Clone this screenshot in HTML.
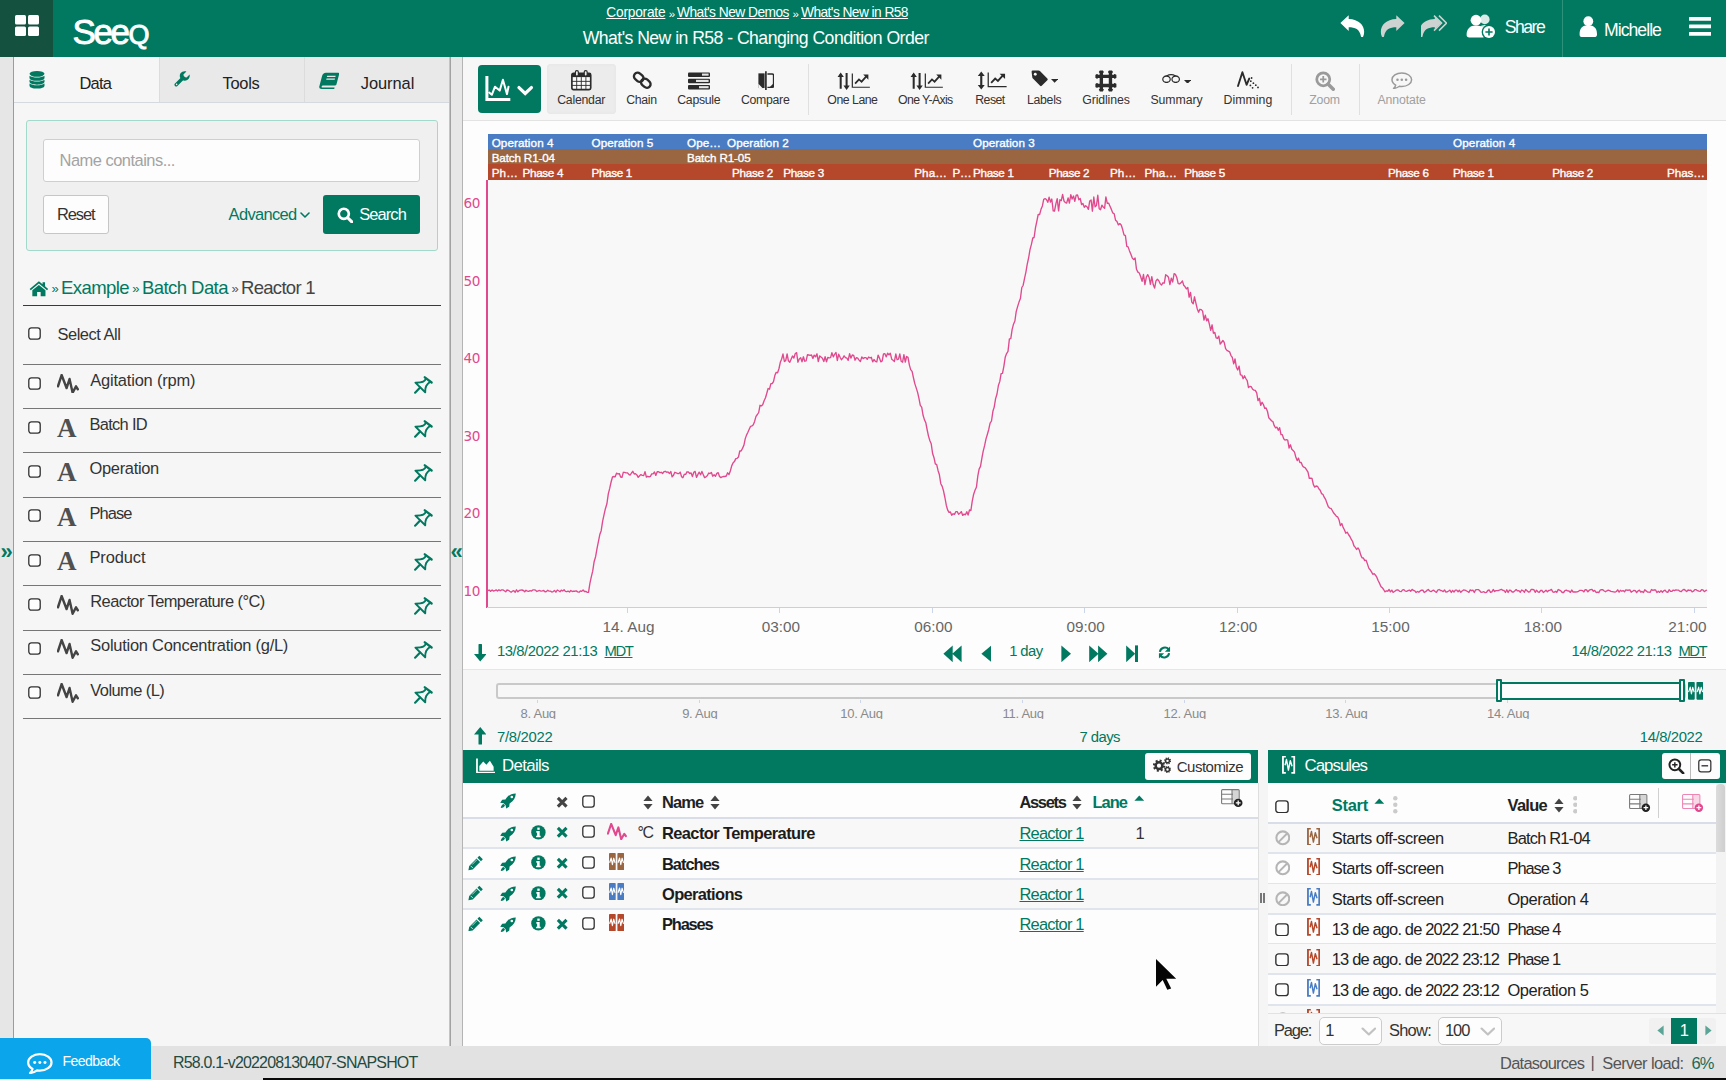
<!DOCTYPE html>
<html lang="en"><head><meta charset="utf-8"><title>Seeq - What's New in R58 - Changing Condition Order</title>
<style>
html,body{margin:0;padding:0;}
body{width:1726px;height:1080px;overflow:hidden;position:relative;background:#fdfdfd;font-family:"Liberation Sans",sans-serif;}
.b{position:absolute;display:block;}
.t{position:absolute;white-space:nowrap;line-height:20px;font-family:"Liberation Sans",sans-serif;}
</style></head>
<body>
<div class="b" style="left:0px;top:0px;width:1726px;height:1080px;background:#fdfdfd;"></div>
<div class="b" style="left:0px;top:0px;width:1726px;height:57px;background:#007960;"></div>
<div class="b" style="left:0px;top:0px;width:53px;height:57px;background:#15513f;"></div>
<svg class="b" style="left:14.5px;top:15px;" width="24" height="21" viewBox="0 0 24 21" preserveAspectRatio="none"><rect x="0" y="0" width="11" height="9.5" rx="1.5" fill="#fff"/><rect x="0" y="11.5" width="11" height="9.5" rx="1.5" fill="#fff"/><rect x="13" y="0" width="11" height="9.5" rx="1.5" fill="#fff"/><rect x="13" y="11.5" width="11" height="9.5" rx="1.5" fill="#fff"/></svg>
<span class="t" style="left:72.5px;top:11.6px;font-size:35px;line-height:40px;letter-spacing:-2.4px;color:#fff;font-weight:400;-webkit-text-stroke:0.9px #fff;">See<span style="font-size:27px;letter-spacing:0;margin-left:1px;text-transform:uppercase">q</span></span>
<span class="t " style="left:606.30px;top:2.96px;font-size:13.76px;letter-spacing:-0.232px;color:#fff;text-decoration:underline;">Corporate</span>
<span class="t " style="left:668.80px;top:3.73px;font-size:11.5px;letter-spacing:-0.230px;color:#fff;">»</span>
<span class="t " style="left:677.00px;top:2.96px;font-size:13.76px;letter-spacing:-0.524px;color:#fff;text-decoration:underline;">What's New Demos</span>
<span class="t " style="left:792.60px;top:3.73px;font-size:11.5px;letter-spacing:-0.230px;color:#fff;">»</span>
<span class="t " style="left:801.00px;top:2.96px;font-size:13.76px;letter-spacing:-0.563px;color:#fff;text-decoration:underline;">What's New in R58</span>
<span class="t " style="left:582.70px;top:27.50px;font-size:17.65px;letter-spacing:-0.545px;color:#fff;">What's New in R58 - Changing Condition Order</span>
<svg class="b" style="left:1339.5px;top:14.6px;" width="26" height="22.4" viewBox="0 0 26 22.400" preserveAspectRatio="none"><path d="M8.700 0.300 L0.400 8.100 L8.700 15.900 V12.200 C15 12.200 19.800 14 21 21.600 C21.200 22.400 22.800 22.400 23.200 21.600 C26.500 13 21 4.400 8.700 4 Z" fill="#fff"/></svg>
<svg class="b" style="left:1379.4px;top:14.6px;" width="26" height="22.4" viewBox="0 0 26 22.400" preserveAspectRatio="none"><g transform="translate(26 0) scale(-1 1)"><path d="M8.700 0.300 L0.400 8.100 L8.700 15.900 V12.200 C15 12.200 19.800 14 21 21.600 C21.200 22.400 22.800 22.400 23.200 21.600 C26.500 13 21 4.400 8.700 4 Z" fill="#cdd3d0"/></g></svg>
<svg class="b" style="left:1420.8px;top:14.6px;" width="26.4" height="22.4" viewBox="0 0 26.400 22.400" preserveAspectRatio="none"><g transform="translate(22.500 0) scale(-1 1)"><path d="M8.700 2.300 L2.400 8.100 L8.700 13.900 V12.200 C15 12.200 19.800 14 21 21.600 C21.200 22.400 22.800 22.400 23.200 21.600 C26.500 13 21 4.400 8.700 4 Z" fill="#cdd3d0"/></g><path d="M13 0.600 L20.600 8.100 L13 15.600 M18 0.600 L25.600 8.100 L18 15.600" fill="none" stroke="#cdd3d0" stroke-width="1.500"/></svg>
<svg class="b" style="left:1465.5px;top:14.4px;" width="30.5" height="25.5" viewBox="0 0 30.500 25.500" preserveAspectRatio="none"><circle cx="18.800" cy="5.400" r="4.800" fill="#fff" opacity="0.850"/><path d="M11.600 20 c0 -6 2.800 -9 7.200 -9 s7.400 3 7.400 9 c0 1.400 -1 2 -2.400 2 h-10 c-1.400 0 -2.200 -0.600 -2.200 -2z" fill="#fff" opacity="0.850"/><circle cx="10" cy="6.200" r="5.400" fill="#fff"/><path d="M0.600 21 c0 -6.400 3.400 -9.600 9.400 -9.600 s9.400 3.200 9.400 9.600 c0 1.600 -1 2.400 -2.600 2.400 h-13.600 c-1.600 0 -2.600 -0.800 -2.600 -2.400z" fill="#fff"/><circle cx="23" cy="18" r="7.400" fill="#007960"/><circle cx="23" cy="18" r="6" fill="#fff"/><path d="M19.400 18 h7.200 M23 14.400 v7.200" stroke="#007960" stroke-width="1.600"/></svg>
<span class="t " style="left:1504.70px;top:17.30px;font-size:17.65px;letter-spacing:-1.500px;color:#fff;">Share</span>
<div class="b" style="left:1562px;top:0px;width:1px;height:57px;background:rgba(255,255,255,0.18);"></div>
<svg class="b" style="left:1578.7px;top:15.6px;" width="18.6" height="21.4" viewBox="0 0 19 21.500" preserveAspectRatio="none"><circle cx="9.500" cy="5.200" r="5" fill="#fff"/><path d="M0.600 18.600 c0 -6.200 2.800 -9.200 8.900 -9.200 s8.900 3 8.900 9.200 c0 1.600 -1 2.600 -2.600 2.600 h-12.600 c-1.600 0 -2.600 -1 -2.600 -2.600z" fill="#fff"/></svg>
<span class="t " style="left:1604.00px;top:20.00px;font-size:17.65px;letter-spacing:-0.968px;color:#fff;">Michelle</span>
<svg class="b" style="left:1689px;top:16.8px;" width="22.4" height="19" viewBox="0 0 22 19" preserveAspectRatio="none"><rect x="0" y="0" width="22" height="3.800" rx="0.600" fill="#fff"/><rect x="0" y="7.5" width="22" height="3.800" rx="0.600" fill="#fff"/><rect x="0" y="15" width="22" height="3.800" rx="0.600" fill="#fff"/></svg>
<div class="b" style="left:0px;top:57px;width:13px;height:990px;background:#e6e6e6;"></div>
<div class="b" style="left:13px;top:57px;width:1px;height:990px;background:#9c9c9c;"></div>
<span class="t " style="left:0.60px;top:541.85px;font-size:22px;letter-spacing:0.000px;color:#007960;font-weight:700;">»</span>
<div class="b" style="left:14px;top:57px;width:435px;height:990px;background:#f6f6f6;"></div>
<div class="b" style="left:449px;top:57px;width:1px;height:990px;background:#c4c4c4;"></div>
<div class="b" style="left:450px;top:57px;width:1px;height:990px;background:#a2a2a2;"></div>
<div class="b" style="left:451px;top:57px;width:11px;height:990px;background:#e7e7e7;"></div>
<div class="b" style="left:462px;top:57px;width:1px;height:990px;background:#b4b4b4;"></div>
<span class="t " style="left:450.60px;top:541.85px;font-size:22px;letter-spacing:0.000px;color:#007960;font-weight:700;">«</span>
<div class="b" style="left:159px;top:57px;width:290px;height:45px;background:#e9e9e9;"></div>
<div class="b" style="left:158.5px;top:57px;width:1px;height:45px;background:#dcdcdc;"></div>
<div class="b" style="left:303.5px;top:57px;width:1px;height:45px;background:#dcdcdc;"></div>
<div class="b" style="left:14px;top:102px;width:435px;height:1px;background:#d5d9e0;"></div>
<svg class="b" style="left:28.5px;top:70.5px;" width="16" height="18" viewBox="0 0 16 19.5" preserveAspectRatio="none"><ellipse cx="8" cy="3.1" rx="7.5" ry="3.1" fill="#007960"/><path d="M0.5 5.2 v2.3 c0 1.8 3.4 3.1 7.5 3.1 s7.5 -1.3 7.5 -3.1 v-2.3 c-1.6 1.3 -4.5 1.9 -7.5 1.9 s-5.9 -0.6 -7.5 -1.9z" fill="#007960"/><path d="M0.5 9.4 v2.3 c0 1.8 3.4 3.1 7.5 3.1 s7.5 -1.3 7.5 -3.1 v-2.3 c-1.6 1.3 -4.5 1.9 -7.5 1.9 s-5.9 -0.6 -7.5 -1.9z" fill="#007960"/><path d="M0.5 13.6 v2.3 c0 1.8 3.4 3.1 7.5 3.1 s7.5 -1.3 7.5 -3.1 v-2.3 c-1.6 1.3 -4.5 1.9 -7.5 1.9 s-5.9 -0.6 -7.5 -1.9z" fill="#007960"/></svg>
<span class="t " style="left:79.50px;top:73.19px;font-size:16.47px;letter-spacing:-0.823px;color:#222;">Data</span>
<svg class="b" style="left:173.5px;top:71px;" width="16" height="16" viewBox="0 0 16 16" preserveAspectRatio="none"><path d="M2.2 13.8 L9.2 6.8" stroke="#007960" stroke-width="3.4" stroke-linecap="round" fill="none"/><path d="M15.6 3.6 l-3 3 l-2.6 -0.6 l-0.6 -2.6 l3 -3 c-2.2 -0.7 -4.6 0 -5.9 1.9 c-1.2 1.9 -0.9 4.4 0.7 6 c1.6 1.6 4.1 1.9 6 0.7 c1.9 -1.3 2.9 -3.2 2.4 -5.4z" fill="#007960"/><circle cx="2.6" cy="13.4" r="0.8" fill="#f0f0f0"/></svg>
<span class="t " style="left:222.50px;top:73.19px;font-size:16.47px;letter-spacing:-0.290px;color:#222;">Tools</span>
<svg class="b" style="left:318.5px;top:71.5px;" width="20" height="17" viewBox="-1 0 20 18" preserveAspectRatio="none"><g transform="skewX(-14)"><path d="M6.2 0.8 h12.3 a1.2 1.2 0 0 1 1.2 1.2 v11.2 a1.2 1.2 0 0 1 -1.2 1.2 h-12 a1 1 0 0 0 0 2 h12.2 v1.6 h-12.6 a3 3 0 0 1 -3 -3 v-10.8 a3.3 3.3 0 0 1 3.1 -3.4z" fill="#007960"/><rect x="8.2" y="4" width="8.5" height="1.3" fill="#e8e8e8"/><rect x="8.2" y="6.8" width="8.5" height="1.3" fill="#e8e8e8"/></g></svg>
<span class="t " style="left:360.80px;top:73.19px;font-size:16.47px;letter-spacing:-0.074px;color:#222;">Journal</span>
<div class="b" style="left:25.5px;top:120.4px;width:412px;height:131px;background:#f0f0f0;border:1.600px solid #a3d9cb;border-radius:3px;box-sizing:border-box;"></div>
<div class="b" style="left:42.5px;top:138.5px;width:377.5px;height:43.5px;background:#fdfdfd;border:1px solid #cfcfcf;border-radius:3px;box-sizing:border-box;"></div>
<span class="t " style="left:59.50px;top:150.29px;font-size:16.47px;letter-spacing:-0.505px;color:#a3a3a3;">Name contains...</span>
<div class="b" style="left:42.5px;top:195px;width:66px;height:39px;background:#fdfdfd;border:1px solid #c6c6c6;border-radius:3px;box-sizing:border-box;"></div>
<span class="t " style="left:57.00px;top:204.19px;font-size:16.47px;letter-spacing:-1.105px;color:#333;">Reset</span>
<span class="t " style="left:228.60px;top:204.19px;font-size:16.47px;letter-spacing:-0.657px;color:#007960;">Advanced</span>
<svg class="b" style="left:299.6px;top:211.6px;" width="10" height="6" viewBox="0 0 10 6" preserveAspectRatio="none"><path d="M1 1 L5 5 L9 1" fill="none" stroke="#007960" stroke-width="1.6" stroke-linecap="round" stroke-linejoin="round"/></svg>
<div class="b" style="left:323px;top:195px;width:97px;height:39px;background:#007960;border-radius:3px;"></div>
<svg class="b" style="left:336.5px;top:206.5px;" width="16.5" height="16.5" viewBox="0 0 16 16" preserveAspectRatio="none"><circle cx="6.6" cy="6.6" r="4.9" fill="none" stroke="#fff" stroke-width="2.6"/><path d="M10.4 10.4 L14.4 14.4" stroke="#fff" stroke-width="3.0" stroke-linecap="round"/></svg>
<span class="t " style="left:359.20px;top:204.19px;font-size:16.47px;letter-spacing:-0.898px;color:#fff;">Search</span>
<svg class="b" style="left:29px;top:280.2px;" width="19.8" height="16.6" viewBox="0 0 19 16" preserveAspectRatio="none"><path d="M9.5 1.2 L0.6 8.6 l1.1 1.3 L9.5 3.4 l7.8 6.5 l1.1 -1.3 l-3 -2.5 V2.2 h-2.4 v1.9z" fill="#007960"/><path d="M9.5 4.8 L3.2 10 v5.6 h4.6 v-4 h3.4 v4 h4.6 V10z" fill="#007960"/></svg>
<span class="t " style="left:51.50px;top:278.85px;font-size:13px;letter-spacing:-0.260px;color:#007960;">»</span>
<span class="t " style="left:61.00px;top:278.11px;font-size:18.55px;letter-spacing:-0.596px;color:#007960;">Example</span>
<span class="t " style="left:132.30px;top:278.85px;font-size:13px;letter-spacing:-0.260px;color:#007960;">»</span>
<span class="t " style="left:142.00px;top:278.11px;font-size:18.55px;letter-spacing:-0.577px;color:#007960;">Batch Data</span>
<span class="t " style="left:231.50px;top:278.85px;font-size:13px;letter-spacing:-0.260px;color:#555;">»</span>
<span class="t " style="left:241.00px;top:278.11px;font-size:18.55px;letter-spacing:-0.714px;color:#444;">Reactor 1</span>
<div class="b" style="left:23px;top:305px;width:417.5px;height:1px;background:#3a3a3a;"></div>
<svg class="b" style="left:28.2px;top:327.4px;" width="13" height="13" viewBox="0 0 13 13" preserveAspectRatio="none"><rect x="0.800" y="0.800" width="11.400" height="11.400" rx="2.600" fill="#fdfdfd" stroke="#303030" stroke-width="1.300"/></svg>
<span class="t " style="left:57.50px;top:324.09px;font-size:16.47px;letter-spacing:-0.475px;color:#333;">Select All</span>
<div class="b" style="left:23px;top:364px;width:417.5px;height:1px;background:#767676;"></div>
<svg class="b" style="left:28.2px;top:376.59999999999997px;" width="13" height="13" viewBox="0 0 13 13" preserveAspectRatio="none"><rect x="0.800" y="0.800" width="11.400" height="11.400" rx="2.600" fill="#fdfdfd" stroke="#303030" stroke-width="1.300"/></svg>
<svg class="b" style="left:56.5px;top:373.59999999999997px;" width="22" height="19.6" viewBox="0 0 20 17" preserveAspectRatio="none"><path d="M0.900 10.600 L4.200 0.900 L8.700 12.200 L11.400 4.400 L14.200 16.200 L17.300 10.800 L18.900 13.200" fill="none" stroke="#444" stroke-width="2.2" stroke-linejoin="round" stroke-linecap="round"/></svg>
<span class="t " style="left:90.30px;top:369.79px;font-size:16.47px;letter-spacing:-0.200px;color:#333;">Agitation (rpm)</span>
<svg class="b" style="left:414.3px;top:375.8px;" width="18.5" height="17.9" viewBox="0 0 18.500 17.900" preserveAspectRatio="none"><g fill="none" stroke="#007960" stroke-linejoin="round" stroke-linecap="round"><path d="M10.800 1.300 L17.600 6.500" stroke-width="2.300"/><path d="M11.900 2.600 C10.800 5.400 9.400 6.400 1.400 6.600 L11.200 16.300 C11 10.600 12.400 8.600 16.200 5.800" stroke-width="1.900"/><path d="M6.100 11.500 L1.100 16.700" stroke-width="2.100"/></g></svg>
<div class="b" style="left:23px;top:408px;width:417.5px;height:1px;background:#767676;"></div>
<svg class="b" style="left:28.2px;top:420.86999999999995px;" width="13" height="13" viewBox="0 0 13 13" preserveAspectRatio="none"><rect x="0.800" y="0.800" width="11.400" height="11.400" rx="2.600" fill="#fdfdfd" stroke="#303030" stroke-width="1.300"/></svg>
<span class="t" style="left:57px;top:414.07px;font-family:'Liberation Serif',serif;font-weight:700;font-size:27px;line-height:28px;color:#505050;">A</span>
<span class="t " style="left:89.50px;top:414.06px;font-size:16.47px;letter-spacing:-0.708px;color:#333;">Batch ID</span>
<svg class="b" style="left:414.3px;top:420.07px;" width="18.5" height="17.9" viewBox="0 0 18.500 17.900" preserveAspectRatio="none"><g fill="none" stroke="#007960" stroke-linejoin="round" stroke-linecap="round"><path d="M10.800 1.300 L17.600 6.500" stroke-width="2.300"/><path d="M11.900 2.600 C10.800 5.400 9.400 6.400 1.400 6.600 L11.200 16.300 C11 10.600 12.400 8.600 16.200 5.800" stroke-width="1.900"/><path d="M6.100 11.500 L1.100 16.700" stroke-width="2.100"/></g></svg>
<div class="b" style="left:23px;top:452px;width:417.5px;height:1px;background:#767676;"></div>
<svg class="b" style="left:28.2px;top:465.14px;" width="13" height="13" viewBox="0 0 13 13" preserveAspectRatio="none"><rect x="0.800" y="0.800" width="11.400" height="11.400" rx="2.600" fill="#fdfdfd" stroke="#303030" stroke-width="1.300"/></svg>
<span class="t" style="left:57px;top:458.34000000000003px;font-family:'Liberation Serif',serif;font-weight:700;font-size:27px;line-height:28px;color:#505050;">A</span>
<span class="t " style="left:89.50px;top:458.33px;font-size:16.47px;letter-spacing:-0.315px;color:#333;">Operation</span>
<svg class="b" style="left:414.3px;top:464.34000000000003px;" width="18.5" height="17.9" viewBox="0 0 18.500 17.900" preserveAspectRatio="none"><g fill="none" stroke="#007960" stroke-linejoin="round" stroke-linecap="round"><path d="M10.800 1.300 L17.600 6.500" stroke-width="2.300"/><path d="M11.900 2.600 C10.800 5.400 9.400 6.400 1.400 6.600 L11.200 16.300 C11 10.600 12.400 8.600 16.200 5.800" stroke-width="1.900"/><path d="M6.100 11.500 L1.100 16.700" stroke-width="2.100"/></g></svg>
<div class="b" style="left:23px;top:497px;width:417.5px;height:1px;background:#767676;"></div>
<svg class="b" style="left:28.2px;top:509.40999999999997px;" width="13" height="13" viewBox="0 0 13 13" preserveAspectRatio="none"><rect x="0.800" y="0.800" width="11.400" height="11.400" rx="2.600" fill="#fdfdfd" stroke="#303030" stroke-width="1.300"/></svg>
<span class="t" style="left:57px;top:502.61px;font-family:'Liberation Serif',serif;font-weight:700;font-size:27px;line-height:28px;color:#505050;">A</span>
<span class="t " style="left:89.50px;top:502.60px;font-size:16.47px;letter-spacing:-0.940px;color:#333;">Phase</span>
<svg class="b" style="left:414.3px;top:508.61px;" width="18.5" height="17.9" viewBox="0 0 18.500 17.900" preserveAspectRatio="none"><g fill="none" stroke="#007960" stroke-linejoin="round" stroke-linecap="round"><path d="M10.800 1.300 L17.600 6.500" stroke-width="2.300"/><path d="M11.900 2.600 C10.800 5.400 9.400 6.400 1.400 6.600 L11.200 16.300 C11 10.600 12.400 8.600 16.200 5.800" stroke-width="1.900"/><path d="M6.100 11.500 L1.100 16.700" stroke-width="2.100"/></g></svg>
<div class="b" style="left:23px;top:541px;width:417.5px;height:1px;background:#767676;"></div>
<svg class="b" style="left:28.2px;top:553.68px;" width="13" height="13" viewBox="0 0 13 13" preserveAspectRatio="none"><rect x="0.800" y="0.800" width="11.400" height="11.400" rx="2.600" fill="#fdfdfd" stroke="#303030" stroke-width="1.300"/></svg>
<span class="t" style="left:57px;top:546.88px;font-family:'Liberation Serif',serif;font-weight:700;font-size:27px;line-height:28px;color:#505050;">A</span>
<span class="t " style="left:89.50px;top:546.87px;font-size:16.47px;letter-spacing:-0.109px;color:#333;">Product</span>
<svg class="b" style="left:414.3px;top:552.88px;" width="18.5" height="17.9" viewBox="0 0 18.500 17.900" preserveAspectRatio="none"><g fill="none" stroke="#007960" stroke-linejoin="round" stroke-linecap="round"><path d="M10.800 1.300 L17.600 6.500" stroke-width="2.300"/><path d="M11.900 2.600 C10.800 5.400 9.400 6.400 1.400 6.600 L11.200 16.300 C11 10.600 12.400 8.600 16.200 5.800" stroke-width="1.900"/><path d="M6.100 11.500 L1.100 16.700" stroke-width="2.100"/></g></svg>
<div class="b" style="left:23px;top:585px;width:417.5px;height:1px;background:#767676;"></div>
<svg class="b" style="left:28.2px;top:597.9499999999999px;" width="13" height="13" viewBox="0 0 13 13" preserveAspectRatio="none"><rect x="0.800" y="0.800" width="11.400" height="11.400" rx="2.600" fill="#fdfdfd" stroke="#303030" stroke-width="1.300"/></svg>
<svg class="b" style="left:56.5px;top:594.9499999999999px;" width="22" height="19.6" viewBox="0 0 20 17" preserveAspectRatio="none"><path d="M0.900 10.600 L4.200 0.900 L8.700 12.200 L11.400 4.400 L14.200 16.200 L17.300 10.800 L18.900 13.200" fill="none" stroke="#444" stroke-width="2.2" stroke-linejoin="round" stroke-linecap="round"/></svg>
<span class="t " style="left:90.30px;top:591.14px;font-size:16.47px;letter-spacing:-0.581px;color:#333;">Reactor Temperature (°C)</span>
<svg class="b" style="left:414.3px;top:597.15px;" width="18.5" height="17.9" viewBox="0 0 18.500 17.900" preserveAspectRatio="none"><g fill="none" stroke="#007960" stroke-linejoin="round" stroke-linecap="round"><path d="M10.800 1.300 L17.600 6.500" stroke-width="2.300"/><path d="M11.900 2.600 C10.800 5.400 9.400 6.400 1.400 6.600 L11.200 16.300 C11 10.600 12.400 8.600 16.200 5.800" stroke-width="1.900"/><path d="M6.100 11.500 L1.100 16.700" stroke-width="2.100"/></g></svg>
<div class="b" style="left:23px;top:630px;width:417.5px;height:1px;background:#767676;"></div>
<svg class="b" style="left:28.2px;top:642.2199999999999px;" width="13" height="13" viewBox="0 0 13 13" preserveAspectRatio="none"><rect x="0.800" y="0.800" width="11.400" height="11.400" rx="2.600" fill="#fdfdfd" stroke="#303030" stroke-width="1.300"/></svg>
<svg class="b" style="left:56.5px;top:639.2199999999999px;" width="22" height="19.6" viewBox="0 0 20 17" preserveAspectRatio="none"><path d="M0.900 10.600 L4.200 0.900 L8.700 12.200 L11.400 4.400 L14.200 16.200 L17.300 10.800 L18.900 13.200" fill="none" stroke="#444" stroke-width="2.2" stroke-linejoin="round" stroke-linecap="round"/></svg>
<span class="t " style="left:90.30px;top:635.41px;font-size:16.47px;letter-spacing:-0.253px;color:#333;">Solution Concentration (g/L)</span>
<svg class="b" style="left:414.3px;top:641.42px;" width="18.5" height="17.9" viewBox="0 0 18.500 17.900" preserveAspectRatio="none"><g fill="none" stroke="#007960" stroke-linejoin="round" stroke-linecap="round"><path d="M10.800 1.300 L17.600 6.500" stroke-width="2.300"/><path d="M11.900 2.600 C10.800 5.400 9.400 6.400 1.400 6.600 L11.200 16.300 C11 10.600 12.400 8.600 16.200 5.800" stroke-width="1.900"/><path d="M6.100 11.500 L1.100 16.700" stroke-width="2.100"/></g></svg>
<div class="b" style="left:23px;top:674px;width:417.5px;height:1px;background:#767676;"></div>
<svg class="b" style="left:28.2px;top:686.49px;" width="13" height="13" viewBox="0 0 13 13" preserveAspectRatio="none"><rect x="0.800" y="0.800" width="11.400" height="11.400" rx="2.600" fill="#fdfdfd" stroke="#303030" stroke-width="1.300"/></svg>
<svg class="b" style="left:56.5px;top:683.49px;" width="22" height="19.6" viewBox="0 0 20 17" preserveAspectRatio="none"><path d="M0.900 10.600 L4.200 0.900 L8.700 12.200 L11.400 4.400 L14.200 16.200 L17.300 10.800 L18.900 13.200" fill="none" stroke="#444" stroke-width="2.2" stroke-linejoin="round" stroke-linecap="round"/></svg>
<span class="t " style="left:90.30px;top:679.68px;font-size:16.47px;letter-spacing:-0.564px;color:#333;">Volume (L)</span>
<svg class="b" style="left:414.3px;top:685.69px;" width="18.5" height="17.9" viewBox="0 0 18.500 17.900" preserveAspectRatio="none"><g fill="none" stroke="#007960" stroke-linejoin="round" stroke-linecap="round"><path d="M10.800 1.300 L17.600 6.500" stroke-width="2.300"/><path d="M11.900 2.600 C10.800 5.400 9.400 6.400 1.400 6.600 L11.200 16.300 C11 10.600 12.400 8.600 16.200 5.800" stroke-width="1.900"/><path d="M6.100 11.500 L1.100 16.700" stroke-width="2.100"/></g></svg>
<div class="b" style="left:23px;top:718px;width:417.5px;height:1px;background:#767676;"></div>
<div class="b" style="left:463px;top:57px;width:1263px;height:63px;background:#f7f7f7;"></div>
<div class="b" style="left:463px;top:120px;width:1263px;height:1px;background:#e3e3e3;"></div>
<div class="b" style="left:477.8px;top:65px;width:63.1px;height:47.8px;background:#007960;border-radius:4px;"></div>
<svg class="b" style="left:0px;top:0px" width="560" height="120" viewBox="0 0 560 120"><path d="M486.900 76 V99.500 H510.300" fill="none" stroke="#fff" stroke-width="3"/><path d="M489.200 92.600 L491.800 94.800 L495 86.700 L499.700 90.600 L502.900 79.800 L507 94.100 L508.500 86.700" fill="none" stroke="#fff" stroke-width="2" stroke-linejoin="round" stroke-linecap="round"/><path d="M519 87.600 L525.200 93.400 L531.400 87.600" fill="none" stroke="#fff" stroke-width="3.300" stroke-linecap="round" stroke-linejoin="miter"/></svg>
<div class="b" style="left:547.3px;top:63.7px;width:68.7px;height:50.3px;background:#ececec;border-radius:4px;box-shadow:inset 0 0 3px #e2e2e2;"></div>
<svg class="b" style="left:571.4px;top:70px;" width="20.6" height="20.6" viewBox="0 0 21 20.300" preserveAspectRatio="none"><rect x="0.900" y="3.400" width="19.200" height="16" rx="1.600" fill="#fbfbfb" stroke="#2b2b2b" stroke-width="1.700"/><rect x="0.900" y="3.400" width="19.200" height="3.600" fill="#2b2b2b"/><path d="M1 11.200 h19 M1 15.200 h19 M5.800 7 v12.400 M10.500 7 v12.400 M15.200 7 v12.400" stroke="#2b2b2b" stroke-width="0.900"/><rect x="4.500" y="0.600" width="3" height="5.400" rx="1.400" fill="#ececec" stroke="#2b2b2b" stroke-width="1.200"/><rect x="13.500" y="0.600" width="3" height="5.400" rx="1.400" fill="#ececec" stroke="#2b2b2b" stroke-width="1.200"/></svg>
<span class="t " style="left:557.20px;top:89.94px;font-size:12.31px;letter-spacing:-0.245px;color:#333;">Calendar</span>
<svg class="b" style="left:631.6px;top:69.6px;" width="20.5" height="20.5" viewBox="0 0 20 20" preserveAspectRatio="none"><g fill="none" stroke="#2b2b2b" stroke-width="2.3" transform="rotate(40 10 10)"><rect x="0.5" y="6.4" width="10" height="7.2" rx="3.6"/><rect x="9.5" y="6.4" width="10" height="7.2" rx="3.6"/></g></svg>
<span class="t " style="left:626.25px;top:89.94px;font-size:12.31px;letter-spacing:-0.333px;color:#333;">Chain</span>
<svg class="b" style="left:688px;top:71.6px;" width="22" height="18" viewBox="0 0 22 18.6" preserveAspectRatio="none"><rect x="0" y="0.5" width="22" height="4.6" rx="1" fill="#2b2b2b"/><rect x="0" y="7" width="22" height="4.6" rx="1" fill="#2b2b2b"/><rect x="0" y="13.5" width="22" height="4.6" rx="1" fill="#2b2b2b"/><rect x="14" y="1.6" width="6.6" height="2.2" fill="#e4e4e4"/><rect x="8" y="8.1" width="12.6" height="2.2" fill="#e4e4e4"/><rect x="11" y="14.6" width="9.6" height="2.2" fill="#e4e4e4"/></svg>
<span class="t " style="left:677.30px;top:89.94px;font-size:12.31px;letter-spacing:-0.309px;color:#333;">Capsule</span>
<svg class="b" style="left:757.6px;top:70.8px;" width="16.4" height="19.6" viewBox="0 0 16.400 20" preserveAspectRatio="none"><path d="M0.400 2.400 H6.600 V17.400 H0.400z" fill="#2b2b2b"/><path d="M0.400 17.400 V13 L4.400 17.400z" fill="#f7f7f7"/><path d="M7.900 0.200 V19.800" stroke="#2b2b2b" stroke-width="1.700"/><path d="M9.400 3.100 H14.200 a1.400 1.400 0 0 1 1.400 1.400 V15.300 a1.400 1.400 0 0 1 -1.400 1.400 H9.400" fill="none" stroke="#2b2b2b" stroke-width="1.500"/><path d="M15.600 12.400 V16.800 H11.400z" fill="#2b2b2b"/></svg>
<span class="t " style="left:740.90px;top:89.94px;font-size:12.31px;letter-spacing:-0.290px;color:#333;">Compare</span>
<div class="b" style="left:808px;top:63.5px;width:1px;height:51px;background:#e0e0e0;"></div>
<svg class="b" style="left:836.6px;top:71.6px;" width="33.8" height="18.6" viewBox="0 0 36.6 20" preserveAspectRatio="none"><path d="M4 2.4 V18 M10.4 1 V16.6" stroke="#2b2b2b" stroke-width="2.2"/><path d="M0.6 5.4 L4 0.6 L7.4 5.4z M7 14.6 L10.4 19.4 L13.8 14.6z" fill="#2b2b2b"/><path d="M16.6 1.600 V16.400 H35.6" fill="none" stroke="#2b2b2b" stroke-width="1.300"/><path d="M19.6 12.600 L23.799999999999997 8 L26.6 10.400 L32.0 4.400" fill="none" stroke="#2b2b2b" stroke-width="1.900"/><path d="M28.4 2.800 H34.0 V8.400z" fill="#2b2b2b"/></svg>
<span class="t " style="left:827.30px;top:89.94px;font-size:12.31px;letter-spacing:-0.484px;color:#333;">One Lane</span>
<svg class="b" style="left:909.6px;top:71.6px;" width="33.8" height="18.6" viewBox="0 0 36.6 20" preserveAspectRatio="none"><path d="M4 2.4 V18 M10.4 1 V16.6" stroke="#2b2b2b" stroke-width="2.2"/><path d="M0.6 5.4 L4 0.6 L7.4 5.4z M7 14.6 L10.4 19.4 L13.8 14.6z" fill="#2b2b2b"/><path d="M16.6 1.600 V16.400 H35.6" fill="none" stroke="#2b2b2b" stroke-width="1.300"/><path d="M19.6 12.600 L23.799999999999997 8 L26.6 10.400 L32.0 4.400" fill="none" stroke="#2b2b2b" stroke-width="1.900"/><path d="M28.4 2.800 H34.0 V8.400z" fill="#2b2b2b"/></svg>
<span class="t " style="left:898.10px;top:89.94px;font-size:12.31px;letter-spacing:-0.630px;color:#333;">One Y-Axis</span>
<svg class="b" style="left:976.6px;top:71.4px;" width="30.6" height="19" viewBox="0 0 31.6 20" preserveAspectRatio="none"><path d="M4.4 3 V17" stroke="#2b2b2b" stroke-width="2.2"/><path d="M0.8 5.2 L4.4 0.4 L8 5.2z M0.8 14.8 L4.4 19.6 L8 14.8z" fill="#2b2b2b"/><path d="M11.6 1.600 V16.400 H30.6" fill="none" stroke="#2b2b2b" stroke-width="1.300"/><path d="M14.6 12.600 L18.799999999999997 8 L21.6 10.400 L27.0 4.400" fill="none" stroke="#2b2b2b" stroke-width="1.900"/><path d="M23.4 2.800 H29.0 V8.400z" fill="#2b2b2b"/></svg>
<span class="t " style="left:975.25px;top:89.94px;font-size:12.31px;letter-spacing:-0.532px;color:#333;">Reset</span>
<svg class="b" style="left:1030.6px;top:70px;" width="17.4" height="16.6" viewBox="0 0 18 17" preserveAspectRatio="none"><path d="M0.6 1.8 a1.2 1.2 0 0 1 1.2 -1.2 h6 c0.6 0 1.3 0.3 1.7 0.7 l7.4 7.4 a1.2 1.2 0 0 1 0 1.7 l-5.8 5.8 a1.2 1.2 0 0 1 -1.7 0 L2 8.8 C1.6 8.400 1.300 7.700 1.300 7.100z" fill="#2b2b2b"/><circle cx="4.400" cy="4.400" r="1.500" fill="#f7f7f7"/></svg>
<svg class="b" style="left:1051px;top:79.4px;" width="7.2" height="3.8" viewBox="0 0 8 4.4" preserveAspectRatio="none"><path d="M0 0 H8 L4 4.400z" fill="#2b2b2b"/></svg>
<span class="t " style="left:1026.90px;top:89.94px;font-size:12.31px;letter-spacing:-0.279px;color:#333;">Labels</span>
<svg class="b" style="left:1095.4px;top:70.4px;" width="21.8" height="21.8" viewBox="0 0 22 22" preserveAspectRatio="none"><path d="M6.400 0.400 V21.600 M15.600 0.400 V21.600 M0.400 6.400 H21.600 M0.400 15.600 H21.600" stroke="#2b2b2b" stroke-width="3.400"/><path d="M4 2 h4.800 M13.200 2 h4.800 M4 20 h4.800 M13.200 20 h4.800 M2 4 v4.800 M2 13.200 v4.800 M20 4 v4.800 M20 13.200 v4.800" stroke="#2b2b2b" stroke-width="1.400"/></svg>
<span class="t " style="left:1082.20px;top:89.94px;font-size:12.31px;letter-spacing:-0.108px;color:#333;">Gridlines</span>
<svg class="b" style="left:1162.4px;top:73.8px;" width="18.2" height="9" viewBox="0 0 21 9" preserveAspectRatio="none"><ellipse cx="5.200" cy="5.200" rx="4.300" ry="3.200" fill="none" stroke="#2b2b2b" stroke-width="1.400"/><ellipse cx="15.800" cy="5.200" rx="4.300" ry="3.200" fill="none" stroke="#2b2b2b" stroke-width="1.400"/><path d="M5.200 2 Q10.500 -0.600 15.800 2" fill="none" stroke="#2b2b2b" stroke-width="1.300"/></svg>
<svg class="b" style="left:1184px;top:79.6px;" width="7.2" height="3.8" viewBox="0 0 8 4.4" preserveAspectRatio="none"><path d="M0 0 H8 L4 4.400z" fill="#2b2b2b"/></svg>
<span class="t " style="left:1150.50px;top:89.94px;font-size:12.31px;letter-spacing:-0.095px;color:#333;">Summary</span>
<svg class="b" style="left:1237px;top:71.4px;" width="22" height="18" viewBox="0 0 22 18" preserveAspectRatio="none"><path d="M1 15 L5.400 1.200 L9.600 13.800 L12.200 7.600" fill="none" stroke="#2b2b2b" stroke-width="1.900" stroke-linejoin="round" stroke-linecap="round"/><circle cx="13.8" cy="10.2" r="0.900" fill="#2b2b2b"/><circle cx="16.4" cy="12.2" r="0.900" fill="#2b2b2b"/><circle cx="13.4" cy="14.4" r="0.900" fill="#2b2b2b"/><circle cx="18.8" cy="14.2" r="0.900" fill="#2b2b2b"/><circle cx="15.6" cy="16.8" r="0.900" fill="#2b2b2b"/><circle cx="21" cy="16.4" r="0.900" fill="#2b2b2b"/><circle cx="14.6" cy="7" r="0.900" fill="#2b2b2b"/></svg>
<span class="t " style="left:1223.60px;top:89.94px;font-size:12.31px;letter-spacing:0.034px;color:#333;">Dimming</span>
<div class="b" style="left:1291px;top:63.5px;width:1px;height:51px;background:#e0e0e0;"></div>
<svg class="b" style="left:1314.6px;top:71.4px;" width="20" height="20" viewBox="0 0 16 16" preserveAspectRatio="none"><circle cx="6.6" cy="6.6" r="5.2" fill="none" stroke="#9a9a9a" stroke-width="2.2"/><path d="M10.6 10.6 L14.6 14.6" stroke="#9a9a9a" stroke-width="2.8000000000000003" stroke-linecap="round"/><path d="M4 6.6 h5.2 M6.6 4 v5.2" stroke="#9a9a9a" stroke-width="1.4"/></svg>
<span class="t " style="left:1309.30px;top:89.94px;font-size:12.31px;letter-spacing:-0.217px;color:#a0a0a0;">Zoom</span>
<div class="b" style="left:1359px;top:63.5px;width:1px;height:51px;background:#e0e0e0;"></div>
<svg class="b" style="left:1391px;top:71.6px;" width="21.6" height="17.6" viewBox="0 0 22 18.600" preserveAspectRatio="none"><path d="M11 1 C5.400 1 1 4.200 1 8.200 c0 2.300 1.500 4.300 3.800 5.600 c-0.300 1.400 -1.100 2.600 -2.200 3.600 c2.400 -0.200 4.400 -1 6 -2.300 c0.800 0.100 1.600 0.200 2.400 0.200 c5.600 0 10 -3.200 10 -7.100 S16.600 1 11 1z" fill="none" stroke="#9a9a9a" stroke-width="1.5" stroke-linejoin="round"/><circle cx="6.6" cy="8.200" r="1.300" fill="#9a9a9a"/><circle cx="11" cy="8.200" r="1.300" fill="#9a9a9a"/><circle cx="15.4" cy="8.200" r="1.300" fill="#9a9a9a"/></svg>
<span class="t " style="left:1377.40px;top:89.94px;font-size:12.31px;letter-spacing:-0.110px;color:#a0a0a0;">Annotate</span>
<div class="b" style="left:487.5px;top:180px;width:1219.5px;height:427px;background:#f8f8f8;"></div>
<div class="b" style="left:487.5px;top:133.8px;width:1219.5px;height:15.2px;background:#4a7cc4;"></div>
<div class="b" style="left:487.5px;top:149px;width:1219.5px;height:15.2px;background:#9a6541;"></div>
<div class="b" style="left:487.5px;top:164.2px;width:1219.5px;height:15.4px;background:#b5482a;"></div>
<span class="t " style="left:491.70px;top:132.63px;font-size:11.67px;letter-spacing:0.092px;color:#fff;-webkit-text-stroke:0.350px #fff;">Operation 4</span>
<span class="t " style="left:591.50px;top:132.63px;font-size:11.67px;letter-spacing:0.092px;color:#fff;-webkit-text-stroke:0.350px #fff;">Operation 5</span>
<span class="t " style="left:687.00px;top:132.63px;font-size:11.67px;letter-spacing:0.068px;color:#fff;-webkit-text-stroke:0.350px #fff;">Ope…</span>
<span class="t " style="left:727.00px;top:132.63px;font-size:11.67px;letter-spacing:0.092px;color:#fff;-webkit-text-stroke:0.350px #fff;">Operation 2</span>
<span class="t " style="left:973.00px;top:132.63px;font-size:11.67px;letter-spacing:0.092px;color:#fff;-webkit-text-stroke:0.350px #fff;">Operation 3</span>
<span class="t " style="left:1453.00px;top:132.63px;font-size:11.67px;letter-spacing:0.138px;color:#fff;-webkit-text-stroke:0.350px #fff;">Operation 4</span>
<span class="t " style="left:491.70px;top:148.13px;font-size:11.67px;letter-spacing:-0.143px;color:#fff;-webkit-text-stroke:0.350px #fff;">Batch R1-04</span>
<span class="t " style="left:687.00px;top:148.13px;font-size:11.67px;letter-spacing:-0.106px;color:#fff;-webkit-text-stroke:0.350px #fff;">Batch R1-05</span>
<span class="t " style="left:491.70px;top:162.63px;font-size:11.67px;letter-spacing:0.119px;color:#fff;-webkit-text-stroke:0.350px #fff;">Ph…</span>
<span class="t " style="left:522.50px;top:162.63px;font-size:11.67px;letter-spacing:-0.303px;color:#fff;-webkit-text-stroke:0.350px #fff;">Phase 4</span>
<span class="t " style="left:591.50px;top:162.63px;font-size:11.67px;letter-spacing:-0.332px;color:#fff;-webkit-text-stroke:0.350px #fff;">Phase 1</span>
<span class="t " style="left:732.00px;top:162.63px;font-size:11.67px;letter-spacing:-0.260px;color:#fff;-webkit-text-stroke:0.350px #fff;">Phase 2</span>
<span class="t " style="left:783.20px;top:162.63px;font-size:11.67px;letter-spacing:-0.289px;color:#fff;-webkit-text-stroke:0.350px #fff;">Phase 3</span>
<span class="t " style="left:914.20px;top:162.63px;font-size:11.67px;letter-spacing:0.091px;color:#fff;-webkit-text-stroke:0.350px #fff;">Pha…</span>
<span class="t " style="left:952.50px;top:162.63px;font-size:11.67px;letter-spacing:-0.377px;color:#fff;-webkit-text-stroke:0.350px #fff;">P…</span>
<span class="t " style="left:973.00px;top:162.63px;font-size:11.67px;letter-spacing:-0.303px;color:#fff;-webkit-text-stroke:0.350px #fff;">Phase 1</span>
<span class="t " style="left:1048.70px;top:162.63px;font-size:11.67px;letter-spacing:-0.332px;color:#fff;-webkit-text-stroke:0.350px #fff;">Phase 2</span>
<span class="t " style="left:1110.00px;top:162.63px;font-size:11.67px;letter-spacing:0.085px;color:#fff;-webkit-text-stroke:0.350px #fff;">Ph…</span>
<span class="t " style="left:1144.50px;top:162.63px;font-size:11.67px;letter-spacing:0.016px;color:#fff;-webkit-text-stroke:0.350px #fff;">Pha…</span>
<span class="t " style="left:1184.20px;top:162.63px;font-size:11.67px;letter-spacing:-0.289px;color:#fff;-webkit-text-stroke:0.350px #fff;">Phase 5</span>
<span class="t " style="left:1388.00px;top:162.63px;font-size:11.67px;letter-spacing:-0.303px;color:#fff;-webkit-text-stroke:0.350px #fff;">Phase 6</span>
<span class="t " style="left:1453.00px;top:162.63px;font-size:11.67px;letter-spacing:-0.303px;color:#fff;-webkit-text-stroke:0.350px #fff;">Phase 1</span>
<span class="t " style="left:1552.30px;top:162.63px;font-size:11.67px;letter-spacing:-0.303px;color:#fff;-webkit-text-stroke:0.350px #fff;">Phase 2</span>
<span class="t " style="left:1667.00px;top:162.63px;font-size:11.67px;letter-spacing:-0.054px;color:#fff;-webkit-text-stroke:0.350px #fff;">Phas…</span>
<div class="b" style="left:486.3px;top:180px;width:1.7px;height:428px;background:#e1498e;"></div>
<span class="t" style="left:463.6px;top:192.6px;font-family:'DejaVu Sans',sans-serif;font-size:13.6px;letter-spacing:-0.5px;color:#e1498e;">60</span>
<span class="t" style="left:463.6px;top:271px;font-family:'DejaVu Sans',sans-serif;font-size:13.6px;letter-spacing:-0.5px;color:#e1498e;">50</span>
<span class="t" style="left:463.6px;top:348.2px;font-family:'DejaVu Sans',sans-serif;font-size:13.6px;letter-spacing:-0.5px;color:#e1498e;">40</span>
<span class="t" style="left:463.6px;top:426.2px;font-family:'DejaVu Sans',sans-serif;font-size:13.6px;letter-spacing:-0.5px;color:#e1498e;">30</span>
<span class="t" style="left:463.6px;top:503.4px;font-family:'DejaVu Sans',sans-serif;font-size:13.6px;letter-spacing:-0.5px;color:#e1498e;">20</span>
<span class="t" style="left:463.6px;top:581.3px;font-family:'DejaVu Sans',sans-serif;font-size:13.6px;letter-spacing:-0.5px;color:#e1498e;">10</span>
<div class="b" style="left:487px;top:607px;width:1220px;height:1px;background:#c4d0ea;"></div>
<div class="b" style="left:627.0px;top:608px;width:1px;height:5.4px;background:#ccd6eb;"></div>
<div class="b" style="left:779.4px;top:608px;width:1px;height:5.4px;background:#ccd6eb;"></div>
<div class="b" style="left:931.8px;top:608px;width:1px;height:5.4px;background:#ccd6eb;"></div>
<div class="b" style="left:1084.2px;top:608px;width:1px;height:5.4px;background:#ccd6eb;"></div>
<div class="b" style="left:1236.6px;top:608px;width:1px;height:5.4px;background:#ccd6eb;"></div>
<div class="b" style="left:1389.0px;top:608px;width:1px;height:5.4px;background:#ccd6eb;"></div>
<div class="b" style="left:1541.4px;top:608px;width:1px;height:5.4px;background:#ccd6eb;"></div>
<div class="b" style="left:1693.8px;top:608px;width:1px;height:5.4px;background:#ccd6eb;"></div>
<span class="t " style="left:602.55px;top:617.08px;font-size:15.3px;letter-spacing:0.000px;color:#666;">14. Aug</span>
<span class="t " style="left:761.76px;top:617.08px;font-size:15.3px;letter-spacing:0.000px;color:#666;">03:00</span>
<span class="t " style="left:914.16px;top:617.08px;font-size:15.3px;letter-spacing:0.000px;color:#666;">06:00</span>
<span class="t " style="left:1066.56px;top:617.08px;font-size:15.3px;letter-spacing:0.000px;color:#666;">09:00</span>
<span class="t " style="left:1218.96px;top:617.08px;font-size:15.3px;letter-spacing:0.000px;color:#666;">12:00</span>
<span class="t " style="left:1371.36px;top:617.08px;font-size:15.3px;letter-spacing:0.000px;color:#666;">15:00</span>
<span class="t " style="left:1523.76px;top:617.08px;font-size:15.3px;letter-spacing:0.000px;color:#666;">18:00</span>
<span class="t " style="left:1668.21px;top:617.08px;font-size:15.3px;letter-spacing:0.000px;color:#666;">21:00</span>
<svg class="b" style="left:0;top:0" width="1726" height="620" viewBox="0 0 1726 620"><path d="M488.0 590.5 L489.4 590.1 L490.7 591.4 L492.1 589.9 L493.4 591.1 L494.8 590.7 L496.1 589.9 L497.5 591.0 L498.9 589.8 L500.2 590.8 L501.6 589.9 L502.9 589.9 L504.3 590.8 L505.7 591.8 L507.0 590.0 L508.4 590.3 L509.7 591.3 L511.1 592.2 L512.4 591.2 L513.8 590.7 L515.2 592.2 L516.5 589.8 L517.9 591.9 L519.2 590.5 L520.6 590.1 L522.0 590.0 L523.3 590.5 L524.7 591.8 L526.0 590.2 L527.4 591.2 L528.7 591.4 L530.1 590.7 L531.5 591.1 L532.8 589.9 L534.2 589.9 L535.5 590.2 L536.9 591.5 L538.2 590.8 L539.6 590.5 L541.0 591.2 L542.3 590.9 L543.7 590.5 L545.0 591.8 L546.4 591.5 L547.8 590.3 L549.1 591.2 L550.5 591.1 L551.8 592.0 L553.2 591.6 L554.5 590.4 L555.9 592.2 L557.3 590.0 L558.6 590.8 L560.0 591.7 L561.3 590.1 L562.7 591.0 L564.1 589.8 L565.4 591.4 L566.8 591.7 L568.1 591.2 L569.5 592.0 L570.8 590.5 L572.2 591.5 L573.6 591.2 L574.9 591.2 L576.3 590.9 L577.6 591.9 L579.0 592.2 L580.4 590.9 L581.7 591.4 L583.1 589.9 L584.4 591.5 L585.8 591.4 L587.1 592.3 L588.5 592.3 L589.9 583.3 L591.3 576.9 L592.7 571.2 L594.1 561.8 L595.6 556.7 L597.0 548.7 L598.4 541.7 L599.8 534.6 L601.2 530.7 L602.6 521.3 L604.0 514.9 L605.4 508.7 L606.9 503.8 L608.3 493.8 L609.7 488.4 L611.1 482.0 L612.5 477.0 L613.9 476.5 L615.2 476.8 L616.6 473.1 L617.9 474.0 L619.3 473.6 L620.6 477.0 L622.0 477.4 L623.3 472.3 L624.7 472.4 L626.0 472.8 L627.4 472.8 L628.8 474.4 L630.1 475.1 L631.5 473.0 L632.8 471.3 L634.2 474.0 L635.5 473.7 L636.9 474.9 L638.2 477.4 L639.6 475.7 L640.9 474.6 L642.3 475.3 L643.7 475.6 L645.0 471.6 L646.4 477.1 L647.7 476.3 L649.1 476.9 L650.4 476.4 L651.8 473.8 L653.1 473.9 L654.5 472.0 L655.8 475.4 L657.2 471.7 L658.6 471.7 L659.9 472.6 L661.3 472.3 L662.6 473.5 L664.0 471.6 L665.3 471.3 L666.7 472.3 L668.0 471.9 L669.4 473.6 L670.8 471.5 L672.1 476.9 L673.5 475.2 L674.8 472.3 L676.2 472.9 L677.5 473.5 L678.9 473.6 L680.2 472.1 L681.6 476.7 L682.9 477.7 L684.3 474.3 L685.7 474.4 L687.0 471.8 L688.4 472.0 L689.7 473.5 L691.1 473.0 L692.4 476.6 L693.8 472.3 L695.1 471.4 L696.5 477.4 L697.8 474.7 L699.2 472.2 L700.6 474.8 L701.9 471.5 L703.3 474.7 L704.6 477.6 L706.0 476.8 L707.3 475.8 L708.7 473.0 L710.0 473.6 L711.4 472.4 L712.7 476.2 L714.1 474.7 L715.5 476.3 L716.8 473.4 L718.2 472.7 L719.5 476.5 L720.9 477.6 L722.2 476.8 L723.6 476.5 L724.9 476.5 L726.3 476.0 L727.6 472.8 L729.0 474.6 L730.4 470.7 L731.7 465.9 L733.0 463.0 L734.4 461.6 L735.8 458.6 L737.1 458.3 L738.5 456.9 L739.8 451.0 L741.1 451.0 L742.5 448.4 L743.9 445.3 L745.2 438.9 L746.5 435.1 L747.9 432.3 L749.2 429.2 L750.6 426.3 L752.0 425.9 L753.3 424.7 L754.6 421.4 L756.0 416.4 L757.4 414.5 L758.7 412.5 L760.0 405.3 L761.4 405.9 L762.8 404.5 L764.1 400.8 L765.5 397.7 L766.8 393.2 L768.1 388.5 L769.5 389.2 L770.9 383.6 L772.2 383.5 L773.5 381.6 L774.9 375.3 L776.2 372.4 L777.6 372.8 L779.0 368.5 L780.3 362.3 L781.6 359.2 L783.0 354.0 L784.4 361.5 L785.7 360.6 L787.1 354.0 L788.4 360.8 L789.8 362.3 L791.2 359.1 L792.5 356.0 L793.9 358.0 L795.2 353.8 L796.6 352.6 L797.9 362.2 L799.3 359.0 L800.7 357.8 L802.0 361.8 L803.4 356.8 L804.7 361.2 L806.1 360.8 L807.5 354.6 L808.8 355.0 L810.2 355.4 L811.5 354.9 L812.9 358.4 L814.2 355.1 L815.6 356.7 L817.0 353.8 L818.3 361.6 L819.7 356.0 L821.0 357.1 L822.4 358.3 L823.8 361.5 L825.1 356.7 L826.5 361.7 L827.8 357.5 L829.2 357.8 L830.6 357.7 L831.9 352.7 L833.3 356.9 L834.6 354.3 L836.0 352.5 L837.3 360.5 L838.7 354.2 L840.1 357.2 L841.4 359.8 L842.8 358.1 L844.1 355.8 L845.5 357.7 L846.9 358.1 L848.2 360.3 L849.6 353.6 L850.9 358.1 L852.3 355.0 L853.7 355.3 L855.0 360.2 L856.4 357.6 L857.7 358.1 L859.1 360.1 L860.4 361.6 L861.8 356.9 L863.2 358.6 L864.5 357.6 L865.9 357.6 L867.2 359.4 L868.6 357.0 L870.0 357.8 L871.3 357.3 L872.7 361.9 L874.0 359.5 L875.4 361.3 L876.8 361.9 L878.1 355.1 L879.5 358.1 L880.8 361.9 L882.2 360.9 L883.5 353.9 L884.9 353.7 L886.3 356.9 L887.6 353.2 L889.0 354.9 L890.3 353.2 L891.7 359.2 L893.1 360.3 L894.4 361.5 L895.8 354.0 L897.1 359.7 L898.5 359.1 L899.8 353.9 L901.2 361.3 L902.6 362.2 L903.9 354.7 L905.3 362.0 L906.6 356.5 L908.0 357.4 L909.4 365.1 L910.7 369.6 L912.1 371.4 L913.5 378.0 L914.8 383.6 L916.2 387.9 L917.6 392.4 L918.9 398.2 L920.3 405.4 L921.7 407.1 L923.0 415.0 L924.4 419.6 L925.8 422.7 L927.1 429.5 L928.5 436.1 L929.9 440.8 L931.2 443.7 L932.6 453.5 L934.0 457.7 L935.3 463.9 L936.7 464.7 L938.1 470.7 L939.4 474.8 L940.8 483.7 L942.2 486.4 L943.5 490.8 L944.9 497.5 L946.3 505.2 L947.6 509.9 L949.0 512.4 L950.4 512.0 L951.7 515.3 L953.1 513.8 L954.5 514.4 L955.8 511.7 L957.2 511.6 L958.6 514.3 L959.9 513.2 L961.3 511.6 L962.7 515.4 L964.0 514.1 L965.4 514.8 L966.8 511.7 L968.1 515.1 L969.5 510.0 L970.9 510.5 L972.2 501.3 L973.6 494.5 L975.0 490.3 L976.4 487.3 L977.8 476.2 L979.1 469.1 L980.5 466.4 L981.9 458.2 L983.2 451.2 L984.6 445.7 L986.0 438.9 L987.4 434.2 L988.8 429.2 L990.1 423.2 L991.5 421.0 L992.9 411.3 L994.2 407.1 L995.6 398.6 L997.0 394.0 L998.4 385.5 L999.8 381.4 L1001.1 373.6 L1002.5 373.4 L1003.9 366.1 L1005.2 357.3 L1006.6 353.6 L1008.0 351.4 L1009.4 338.9 L1010.8 338.6 L1012.1 329.6 L1013.5 324.2 L1014.9 321.0 L1016.2 311.6 L1017.6 306.6 L1019.0 302.1 L1020.4 298.6 L1021.8 287.5 L1023.1 285.5 L1024.5 278.6 L1025.9 272.1 L1027.2 264.4 L1028.6 258.0 L1030.0 249.7 L1031.4 244.4 L1032.8 238.0 L1034.1 237.5 L1035.5 227.7 L1036.9 221.0 L1038.2 214.5 L1039.6 214.6 L1041.0 209.3 L1042.4 205.9 L1043.7 199.3 L1045.1 198.6 L1046.4 199.5 L1047.8 202.3 L1049.1 197.2 L1050.5 202.1 L1051.8 199.0 L1053.2 210.9 L1054.5 211.0 L1055.9 203.8 L1057.2 198.7 L1058.6 210.9 L1059.9 199.8 L1061.3 200.6 L1062.6 194.5 L1064.0 201.0 L1065.4 202.6 L1066.7 203.0 L1068.1 197.9 L1069.4 203.1 L1070.8 194.6 L1072.1 199.0 L1073.5 196.0 L1074.8 201.3 L1076.2 195.2 L1077.5 194.9 L1078.9 199.7 L1080.2 198.5 L1081.6 204.5 L1082.9 203.5 L1084.3 207.3 L1085.6 205.7 L1087.0 206.7 L1088.4 209.4 L1089.7 201.1 L1091.1 200.0 L1092.4 211.2 L1093.8 197.0 L1095.1 206.8 L1096.5 205.4 L1097.8 195.2 L1099.2 208.7 L1100.5 209.7 L1101.9 205.2 L1103.2 207.0 L1104.6 208.3 L1105.9 196.9 L1107.3 203.4 L1108.6 203.1 L1110.0 206.3 L1111.4 209.4 L1112.8 212.9 L1114.2 213.8 L1115.6 220.3 L1117.0 221.5 L1118.4 224.9 L1119.8 223.6 L1121.2 225.0 L1122.6 229.3 L1124.0 234.9 L1125.4 235.7 L1126.8 246.4 L1128.1 246.9 L1129.5 250.9 L1130.9 254.3 L1132.3 258.1 L1133.7 259.6 L1135.1 258.0 L1136.5 269.3 L1137.9 272.1 L1139.3 273.0 L1140.7 276.7 L1142.1 281.3 L1143.5 274.5 L1144.9 284.6 L1146.3 277.3 L1147.7 274.6 L1149.1 277.5 L1150.4 284.4 L1151.8 276.6 L1153.2 284.6 L1154.6 288.1 L1156.0 280.9 L1157.4 279.2 L1158.8 280.7 L1160.2 283.8 L1161.6 285.0 L1162.9 282.8 L1164.3 283.1 L1165.7 274.7 L1167.1 275.7 L1168.5 277.3 L1169.9 284.6 L1171.3 278.1 L1172.7 282.0 L1174.1 273.7 L1175.4 274.4 L1176.8 277.5 L1178.2 283.6 L1179.6 283.9 L1181.0 282.8 L1182.4 280.9 L1183.7 285.3 L1185.1 286.8 L1186.4 288.9 L1187.8 287.5 L1189.1 297.2 L1190.5 292.4 L1191.8 302.1 L1193.2 303.8 L1194.5 296.8 L1195.9 303.2 L1197.2 308.7 L1198.6 312.2 L1199.9 309.3 L1201.3 309.6 L1202.6 311.1 L1204.0 320.1 L1205.3 315.2 L1206.7 320.8 L1208.0 318.7 L1209.4 324.3 L1210.7 330.3 L1212.1 324.8 L1213.4 333.2 L1214.8 332.4 L1216.1 337.9 L1217.5 338.3 L1218.8 336.1 L1220.2 344.1 L1221.5 342.5 L1222.9 340.5 L1224.2 342.3 L1225.6 348.7 L1226.9 350.4 L1228.3 351.1 L1229.6 351.8 L1231.0 355.6 L1232.3 357.4 L1233.7 363.9 L1235.0 358.9 L1236.4 367.3 L1237.7 370.0 L1239.1 366.1 L1240.4 374.8 L1241.8 375.1 L1243.1 378.7 L1244.5 375.8 L1245.8 378.5 L1247.2 380.7 L1248.5 387.6 L1249.9 386.4 L1251.3 386.7 L1252.6 389.2 L1254.0 390.1 L1255.3 390.4 L1256.7 392.9 L1258.0 400.6 L1259.4 398.4 L1260.7 405.4 L1262.1 402.3 L1263.4 404.5 L1264.8 408.4 L1266.1 408.0 L1267.5 411.5 L1268.8 417.8 L1270.2 419.3 L1271.5 420.8 L1272.9 421.5 L1274.2 425.6 L1275.6 427.8 L1276.9 427.1 L1278.3 430.3 L1279.6 427.7 L1281.0 434.5 L1282.3 434.6 L1283.7 438.7 L1285.0 440.1 L1286.4 439.7 L1287.7 440.2 L1289.1 448.1 L1290.4 444.8 L1291.8 449.2 L1293.1 450.4 L1294.5 452.1 L1295.8 457.0 L1297.2 460.6 L1298.5 458.1 L1299.9 462.6 L1301.2 462.5 L1302.6 466.1 L1303.9 467.2 L1305.3 467.8 L1306.6 469.9 L1308.0 472.2 L1309.3 478.4 L1310.7 478.1 L1312.0 478.5 L1313.4 484.6 L1314.7 487.1 L1316.1 486.0 L1317.5 486.3 L1318.8 488.7 L1320.2 490.2 L1321.5 493.6 L1322.9 494.3 L1324.2 497.2 L1325.6 499.4 L1326.9 503.1 L1328.3 506.8 L1329.6 508.1 L1331.0 508.4 L1332.3 510.5 L1333.7 513.1 L1335.0 514.4 L1336.4 516.3 L1337.7 516.9 L1339.1 520.1 L1340.4 525.6 L1341.8 523.5 L1343.1 527.4 L1344.5 530.0 L1345.8 533.2 L1347.2 532.2 L1348.5 534.5 L1349.9 536.5 L1351.2 539.2 L1352.6 541.5 L1353.9 545.8 L1355.3 547.4 L1356.6 549.5 L1358.0 547.9 L1359.3 550.0 L1360.7 554.9 L1362.0 557.8 L1363.4 558.0 L1364.7 560.6 L1366.1 560.2 L1367.4 563.9 L1368.8 568.1 L1370.1 569.7 L1371.5 571.9 L1372.8 574.3 L1374.2 573.6 L1375.5 575.2 L1376.9 577.4 L1378.2 580.8 L1379.6 583.4 L1380.9 586.4 L1382.3 587.7 L1383.6 589.5 L1385.0 591.8 L1386.4 590.9 L1387.7 591.2 L1389.1 589.5 L1390.4 591.9 L1391.8 590.1 L1393.1 592.3 L1394.5 591.5 L1395.8 590.4 L1397.2 589.8 L1398.5 590.2 L1399.9 591.4 L1401.2 591.6 L1402.6 589.8 L1403.9 589.6 L1405.3 591.1 L1406.6 591.3 L1408.0 590.6 L1409.4 590.1 L1410.7 591.3 L1412.1 589.4 L1413.4 590.4 L1414.8 590.9 L1416.1 592.5 L1417.5 591.5 L1418.8 592.2 L1420.2 590.9 L1421.5 590.2 L1422.9 590.2 L1424.2 592.5 L1425.6 591.7 L1426.9 590.4 L1428.3 589.5 L1429.6 591.0 L1431.0 591.6 L1432.4 590.7 L1433.7 590.2 L1435.1 591.5 L1436.4 592.4 L1437.8 590.1 L1439.1 589.5 L1440.5 590.5 L1441.8 590.7 L1443.2 591.6 L1444.5 590.0 L1445.9 592.0 L1447.2 591.8 L1448.6 591.0 L1449.9 590.1 L1451.3 592.5 L1452.6 590.4 L1454.0 592.0 L1455.4 590.1 L1456.7 590.1 L1458.1 591.8 L1459.4 590.3 L1460.8 592.4 L1462.1 591.0 L1463.5 590.0 L1464.8 590.1 L1466.2 590.7 L1467.5 591.5 L1468.9 592.4 L1470.2 589.9 L1471.6 590.7 L1472.9 590.1 L1474.3 592.5 L1475.6 589.9 L1477.0 589.6 L1478.4 589.6 L1479.7 590.7 L1481.1 592.3 L1482.4 592.2 L1483.8 591.7 L1485.1 592.6 L1486.5 592.4 L1487.8 590.5 L1489.2 590.0 L1490.5 592.4 L1491.9 591.8 L1493.2 589.5 L1494.6 591.5 L1495.9 590.6 L1497.3 590.6 L1498.6 590.5 L1500.0 589.9 L1501.4 589.4 L1502.7 590.3 L1504.1 590.5 L1505.4 592.5 L1506.8 589.8 L1508.1 592.5 L1509.5 590.1 L1510.8 590.5 L1512.2 592.0 L1513.5 592.0 L1514.9 590.8 L1516.2 589.6 L1517.6 590.9 L1518.9 590.6 L1520.3 592.3 L1521.6 590.0 L1523.0 590.6 L1524.4 592.3 L1525.7 589.5 L1527.1 590.7 L1528.4 592.0 L1529.8 591.9 L1531.1 589.5 L1532.5 589.5 L1533.8 589.6 L1535.2 592.3 L1536.5 590.2 L1537.9 591.8 L1539.2 592.3 L1540.6 590.5 L1541.9 590.3 L1543.3 592.5 L1544.6 591.4 L1546.0 590.2 L1547.4 591.7 L1548.7 590.4 L1550.1 590.3 L1551.4 589.4 L1552.8 591.8 L1554.1 592.3 L1555.5 591.4 L1556.8 592.4 L1558.2 589.5 L1559.5 590.1 L1560.9 590.9 L1562.2 592.5 L1563.6 592.5 L1564.9 590.6 L1566.3 590.2 L1567.6 590.8 L1569.0 591.0 L1570.4 592.4 L1571.7 590.0 L1573.1 592.0 L1574.4 591.8 L1575.8 592.0 L1577.1 591.9 L1578.5 591.3 L1579.8 590.4 L1581.2 590.4 L1582.5 590.6 L1583.9 591.9 L1585.2 589.7 L1586.6 590.0 L1587.9 591.8 L1589.3 590.2 L1590.6 589.6 L1592.0 589.5 L1593.4 591.2 L1594.7 590.4 L1596.1 592.5 L1597.4 592.2 L1598.8 592.6 L1600.1 590.2 L1601.5 589.7 L1602.8 589.7 L1604.2 591.0 L1605.5 591.7 L1606.9 590.8 L1608.2 590.1 L1609.6 590.7 L1610.9 591.4 L1612.3 591.6 L1613.6 591.8 L1615.0 592.1 L1616.4 591.5 L1617.7 589.8 L1619.1 592.1 L1620.4 590.3 L1621.8 591.2 L1623.1 590.6 L1624.5 591.8 L1625.8 590.0 L1627.2 590.2 L1628.5 590.2 L1629.9 589.9 L1631.2 592.2 L1632.6 591.3 L1633.9 590.4 L1635.3 590.7 L1636.6 592.6 L1638.0 591.0 L1639.4 590.1 L1640.7 592.0 L1642.1 591.5 L1643.4 592.6 L1644.8 589.7 L1646.1 590.9 L1647.5 592.0 L1648.8 592.1 L1650.2 592.3 L1651.5 589.5 L1652.9 590.3 L1654.2 589.8 L1655.6 590.0 L1656.9 592.5 L1658.3 591.3 L1659.6 592.4 L1661.0 590.6 L1662.4 592.2 L1663.7 590.8 L1665.1 590.2 L1666.4 591.9 L1667.8 592.4 L1669.1 589.7 L1670.5 591.3 L1671.8 591.4 L1673.2 590.1 L1674.5 590.6 L1675.9 589.9 L1677.2 590.1 L1678.6 590.2 L1679.9 591.3 L1681.3 591.5 L1682.6 590.1 L1684.0 589.4 L1685.4 590.4 L1686.7 591.6 L1688.1 590.0 L1689.4 590.4 L1690.8 590.1 L1692.1 591.9 L1693.5 591.2 L1694.8 589.6 L1696.2 589.7 L1697.5 590.7 L1698.9 591.2 L1700.2 591.4 L1701.6 589.7 L1702.9 589.9 L1704.3 591.6 L1705.6 590.7 L1707.0 590.0" fill="none" stroke="#e1498e" stroke-width="1.35" stroke-linejoin="round"/></svg>
<svg class="b" style="left:473.7px;top:644.4px;" width="12.5" height="17.6" viewBox="0 0 12.500 17.600" preserveAspectRatio="none"><path d="M4.500 0.400 a0.500 0.500 0 0 1 0.500 -0.400 h2.500 a0.500 0.500 0 0 1 0.500 0.400 V10.100 H12.500 L6.250 17.600 L0 10.100 H4.500z" fill="#007960"/></svg>
<span class="t " style="left:497.00px;top:641.27px;font-size:14.84px;letter-spacing:-0.452px;color:#007960;">13/8/2022 21:13</span>
<span class="t " style="left:604.50px;top:641.27px;font-size:14.84px;letter-spacing:-1.381px;color:#007960;text-decoration:underline;">MDT</span>
<svg class="b" style="left:943px;top:644.5px;" width="18.8" height="17.6" viewBox="0 0 19 18" preserveAspectRatio="none"><path d="M9.800 0.400 V17.600 L0.400 9z M18.800 0.400 V17.600 L9.400 9z" fill="#007960"/></svg>
<svg class="b" style="left:980.5px;top:644.5px;" width="10.8" height="17.6" viewBox="0 0 11 18" preserveAspectRatio="none"><path d="M10.600 0.400 V17.600 L0.400 9z" fill="#007960"/></svg>
<span class="t " style="left:1009.20px;top:641.07px;font-size:14.84px;letter-spacing:-0.601px;color:#007960;">1 day</span>
<svg class="b" style="left:1060.6px;top:644.5px;" width="10.4" height="17.6" viewBox="0 0 11 18" preserveAspectRatio="none"><path d="M0.400 0.400 V17.600 L10.600 9z" fill="#007960"/></svg>
<svg class="b" style="left:1089.2px;top:644.5px;" width="18.8" height="17.6" viewBox="0 0 19 18" preserveAspectRatio="none"><path d="M0.200 0.400 V17.600 L9.600 9z M9.200 0.400 V17.600 L18.600 9z" fill="#007960"/></svg>
<svg class="b" style="left:1126.2px;top:644.5px;" width="12" height="17.6" viewBox="0 0 12 18" preserveAspectRatio="none"><path d="M0.200 0.400 V17.600 L9.200 9z" fill="#007960"/><rect x="9" y="0.400" width="3" height="17.200" fill="#007960"/></svg>
<svg class="b" style="left:1157.5px;top:646px;" width="13" height="13" viewBox="0 0 13.600 13.600" preserveAspectRatio="none"><path d="M2 6.200 A5.200 5.200 0 0 1 11.200 3.600" fill="none" stroke="#007960" stroke-width="2.200"/><path d="M12.600 0.600 V6 H7.200z" fill="#007960"/><path d="M11.600 7.400 A5.200 5.200 0 0 1 2.400 10" fill="none" stroke="#007960" stroke-width="2.200"/><path d="M1 13 V7.600 H6.400z" fill="#007960"/></svg>
<span class="t " style="left:1571.50px;top:641.27px;font-size:14.84px;letter-spacing:-0.486px;color:#007960;">14/8/2022 21:13</span>
<span class="t " style="left:1678.50px;top:641.27px;font-size:14.84px;letter-spacing:-1.548px;color:#007960;text-decoration:underline;">MDT</span>
<div class="b" style="left:463px;top:669px;width:1263px;height:80.5px;background:#f6f6f6;"></div>
<div class="b" style="left:463px;top:669px;width:1263px;height:1px;background:#e6e6e6;"></div>
<div class="b" style="left:495.8px;top:682.5px;width:1190px;height:16.4px;background:#f7f7f7;border:2px solid #c9c9c9;border-radius:3px;box-sizing:border-box;"></div>
<div class="b" style="left:537.0px;top:699.5px;width:1px;height:3.5px;background:#ccd6eb;"></div>
<div class="b" style="left:698.65px;top:699.5px;width:1px;height:3.5px;background:#ccd6eb;"></div>
<div class="b" style="left:860.3px;top:699.5px;width:1px;height:3.5px;background:#ccd6eb;"></div>
<div class="b" style="left:1021.95px;top:699.5px;width:1px;height:3.5px;background:#ccd6eb;"></div>
<div class="b" style="left:1183.6000000000001px;top:699.5px;width:1px;height:3.5px;background:#ccd6eb;"></div>
<div class="b" style="left:1345.25px;top:699.5px;width:1px;height:3.5px;background:#ccd6eb;"></div>
<div class="b" style="left:1506.9px;top:699.5px;width:1px;height:3.5px;background:#ccd6eb;"></div>
<div class="b" style="left:463px;top:700px;width:1263px;height:18.800px;overflow:hidden;">
<span class="t " style="left:57.50px;top:4.25px;font-size:13.03px;letter-spacing:-0.261px;color:#8a8a8a;">8. Aug</span>
<span class="t " style="left:219.15px;top:4.25px;font-size:13.03px;letter-spacing:-0.261px;color:#8a8a8a;">9. Aug</span>
<span class="t " style="left:377.31px;top:4.25px;font-size:13.03px;letter-spacing:-0.261px;color:#8a8a8a;">10. Aug</span>
<span class="t " style="left:539.45px;top:4.25px;font-size:13.03px;letter-spacing:-0.261px;color:#8a8a8a;">11. Aug</span>
<span class="t " style="left:700.61px;top:4.25px;font-size:13.03px;letter-spacing:-0.261px;color:#8a8a8a;">12. Aug</span>
<span class="t " style="left:862.26px;top:4.25px;font-size:13.03px;letter-spacing:-0.261px;color:#8a8a8a;">13. Aug</span>
<span class="t " style="left:1023.91px;top:4.25px;font-size:13.03px;letter-spacing:-0.261px;color:#8a8a8a;">14. Aug</span>
</div>
<div class="b" style="left:1497.6px;top:681.8px;width:186px;height:18.2px;background:#fdfdfd;border:2.500px solid #007960;box-sizing:border-box;"></div>
<div class="b" style="left:1495.6px;top:679px;width:6.4px;height:23.4px;background:#fdfdfd;border:2px solid #007960;box-sizing:border-box;border-radius:1px;"></div>
<div class="b" style="left:1679px;top:679px;width:6.4px;height:23.4px;background:#fdfdfd;border:2px solid #007960;box-sizing:border-box;border-radius:1px;"></div>
<svg class="b" style="left:1688px;top:682.2px;" width="15.2" height="17.7" viewBox="0 0 15.100 17.200" preserveAspectRatio="none"><rect x="0" y="0" width="6.700" height="17.200" rx="0.800" fill="#007960"/><rect x="8.400" y="0" width="6.700" height="17.200" rx="0.800" fill="#007960"/><path d="M0.600 9.800 L2.200 5 L3.400 11.600 L4.700 5.200 L6.100 9.800" fill="none" stroke="#fff" stroke-width="1.150" stroke-linejoin="round"/><path d="M9 9.800 L10.600 5 L11.800 11.600 L13.100 5.200 L14.500 9.800" fill="none" stroke="#fff" stroke-width="1.150" stroke-linejoin="round"/></svg>
<svg class="b" style="left:473.7px;top:727.3px;" width="12.5" height="17.6" viewBox="0 0 12.500 17.600" preserveAspectRatio="none"><g transform="translate(0 17.600) scale(1 -1)"><path d="M4.500 0.400 a0.500 0.500 0 0 1 0.500 -0.400 h2.500 a0.500 0.500 0 0 1 0.500 0.400 V10.100 H12.500 L6.250 17.600 L0 10.100 H4.500z" fill="#007960"/></g></svg>
<span class="t " style="left:497.00px;top:727.17px;font-size:14.84px;letter-spacing:-0.284px;color:#007960;">7/8/2022</span>
<span class="t " style="left:1079.50px;top:727.17px;font-size:14.84px;letter-spacing:-0.537px;color:#007960;">7 days</span>
<span class="t " style="left:1639.80px;top:727.17px;font-size:14.84px;letter-spacing:-0.391px;color:#007960;">14/8/2022</span>
<div class="b" style="left:463px;top:749.5px;width:794.5px;height:297.5px;background:#fdfdfd;"></div>
<div class="b" style="left:463px;top:749.5px;width:794.5px;height:33px;background:#007960;"></div>
<svg class="b" style="left:475.5px;top:757.6px;" width="19.6" height="15.6" viewBox="0 0 20 16" preserveAspectRatio="none"><path d="M1 0.500 V15 H19.600" fill="none" stroke="#fff" stroke-width="1.800"/><path d="M3.400 13 V8.200 L7.400 3.600 L10.600 6.800 L14.200 2.800 L18 9 V13z" fill="#fff"/></svg>
<span class="t " style="left:502.00px;top:756.49px;font-size:16.83px;letter-spacing:-0.664px;color:#fff;">Details</span>
<div class="b" style="left:1145px;top:752.5px;width:105.8px;height:27px;background:#fdfdfd;border-radius:3px;"></div>
<svg class="b" style="left:1152.5px;top:757.4px;" width="18.4" height="16.4" viewBox="0 0 19 17" preserveAspectRatio="none"><circle cx="6.2" cy="9" r="4.84" fill="none" stroke="#333" stroke-width="2.98" stroke-dasharray="1.899"/><circle cx="6.2" cy="9" r="3.47" fill="none" stroke="#333" stroke-width="2.60"/><circle cx="15" cy="4" r="2.81" fill="none" stroke="#333" stroke-width="1.73" stroke-dasharray="1.103"/><circle cx="15" cy="4" r="2.02" fill="none" stroke="#333" stroke-width="1.51"/><circle cx="15" cy="13" r="2.81" fill="none" stroke="#333" stroke-width="1.73" stroke-dasharray="1.103"/><circle cx="15" cy="13" r="2.02" fill="none" stroke="#333" stroke-width="1.51"/></svg>
<span class="t " style="left:1176.80px;top:756.87px;font-size:15.02px;letter-spacing:-0.528px;color:#333;">Customize</span>
<div class="b" style="left:463px;top:817px;width:794.5px;height:30px;background:#f8f8f8;"></div>
<div class="b" style="left:463px;top:878px;width:794.5px;height:30px;background:#f8f8f8;"></div>
<div class="b" style="left:463px;top:817px;width:794.5px;height:2px;background:#d8dde7;"></div>
<div class="b" style="left:463px;top:847px;width:794.5px;height:2px;background:#e0e4ec;"></div>
<div class="b" style="left:463px;top:878px;width:794.5px;height:2px;background:#e0e4ec;"></div>
<div class="b" style="left:463px;top:908px;width:794.5px;height:2px;background:#e0e4ec;"></div>
<svg class="b" style="left:499.5px;top:792.5px;" width="16" height="16" viewBox="0 0 16 16.400" preserveAspectRatio="none"><path d="M15.600 0.400 c-4.600 0.200 -7.800 2.200 -10.200 6.200 l-3.200 0.400 l-2 3 l3.400 0.600 l2 2 l0.600 3.400 l3 -2 l0.400 -3.200 c4 -2.400 6 -5.600 6.200 -10.200z" fill="#007960"/><path d="M3.600 11.200 c-1.600 0.400 -2.600 2 -2.800 4.200 c2.200 -0.200 3.800 -1.200 4.200 -2.800z" fill="#007960"/><circle cx="11.800" cy="4.200" r="1.300" fill="#fff"/></svg>
<svg class="b" style="left:556.4px;top:796px;" width="12.4" height="12.4" viewBox="0 0 12 12" preserveAspectRatio="none"><path d="M1.800 1.800 L10.200 10.200 M10.200 1.800 L1.800 10.200" stroke="#444" stroke-width="3" stroke-linecap="butt"/></svg>
<svg class="b" style="left:581.8px;top:794.6px;" width="13" height="13" viewBox="0 0 13 13" preserveAspectRatio="none"><rect x="0.800" y="0.800" width="11.400" height="11.400" rx="2.600" fill="#fdfdfd" stroke="#303030" stroke-width="1.300"/></svg>
<svg class="b" style="left:643.4px;top:794.6px;" width="10" height="15" viewBox="0 0 10 15" preserveAspectRatio="none"><path d="M0.400 6 L5 0.600 L9.600 6z M0.400 9 L5 14.400 L9.600 9z" fill="#444"/></svg>
<span class="t " style="left:662.00px;top:791.69px;font-size:16.47px;letter-spacing:-0.865px;color:#222;font-weight:700;">Name</span>
<svg class="b" style="left:710px;top:794.6px;" width="10" height="15" viewBox="0 0 10 15" preserveAspectRatio="none"><path d="M0.400 6 L5 0.600 L9.600 6z M0.400 9 L5 14.400 L9.600 9z" fill="#444"/></svg>
<span class="t " style="left:1019.50px;top:791.69px;font-size:16.47px;letter-spacing:-1.337px;color:#222;font-weight:700;">Assets</span>
<svg class="b" style="left:1072px;top:794.6px;" width="10" height="15" viewBox="0 0 10 15" preserveAspectRatio="none"><path d="M0.400 6 L5 0.600 L9.600 6z M0.400 9 L5 14.400 L9.600 9z" fill="#444"/></svg>
<span class="t " style="left:1092.50px;top:791.69px;font-size:16.47px;letter-spacing:-0.986px;color:#007960;font-weight:700;">Lane</span>
<svg class="b" style="left:1133.5px;top:795.2px;" width="10.6" height="6.1" viewBox="0 0 10 6" preserveAspectRatio="none"><path d="M0.400 5.600 L5 0.400 L9.600 5.600z" fill="#007960"/></svg>
<svg class="b" style="left:1220.8px;top:789px;" width="22" height="18.6" viewBox="0 0 22 19" preserveAspectRatio="none"><rect x="0.600" y="0.600" width="17.600" height="14.400" rx="1" fill="none" stroke="#7a7a7a" stroke-width="1.100"/><path d="M0.600 5.400 H12 M0.600 10.200 H12" stroke="#7a7a7a" stroke-width="1.100"/><rect x="11" y="1" width="6.800" height="13.600" fill="#7a7a7a" opacity="0.300"/><path d="M11 0.600 V15" stroke="#7a7a7a" stroke-width="1.100"/><circle cx="17.200" cy="14.200" r="4.300" fill="#222"/><path d="M14.800 14.200 h4.800 M17.200 11.800 v4.800" stroke="#fff" stroke-width="1.300"/></svg>
<svg class="b" style="left:499.5px;top:825.5px;" width="16" height="16" viewBox="0 0 16 16.400" preserveAspectRatio="none"><path d="M15.600 0.400 c-4.600 0.200 -7.800 2.200 -10.200 6.200 l-3.200 0.400 l-2 3 l3.400 0.600 l2 2 l0.600 3.400 l3 -2 l0.400 -3.200 c4 -2.400 6 -5.600 6.200 -10.200z" fill="#007960"/><path d="M3.600 11.200 c-1.600 0.400 -2.600 2 -2.800 4.200 c2.200 -0.200 3.800 -1.200 4.200 -2.800z" fill="#007960"/><circle cx="11.800" cy="4.200" r="1.300" fill="#fff"/></svg>
<svg class="b" style="left:531px;top:824.8px;" width="14.8" height="14.8" viewBox="0 0 15 15" preserveAspectRatio="none"><circle cx="7.500" cy="7.500" r="7.300" fill="#007960"/><rect x="6.400" y="2.600" width="2.400" height="2.300" fill="#fff"/><path d="M5.400 6.200 h3.400 v4.600 h1 v1.600 h-4.600 v-1.600 h1 v-3 h-0.800z" fill="#fff"/></svg>
<svg class="b" style="left:556.4px;top:826.4px;" width="12.4" height="12.4" viewBox="0 0 12 12" preserveAspectRatio="none"><path d="M1.800 1.800 L10.200 10.200 M10.200 1.800 L1.800 10.200" stroke="#007960" stroke-width="3" stroke-linecap="butt"/></svg>
<svg class="b" style="left:581.8px;top:825.4px;" width="13" height="13" viewBox="0 0 13 13" preserveAspectRatio="none"><rect x="0.800" y="0.800" width="11.400" height="11.400" rx="2.600" fill="#fdfdfd" stroke="#303030" stroke-width="1.300"/></svg>
<svg class="b" style="left:606.6px;top:822.8px;" width="20" height="17" viewBox="0 0 20 17" preserveAspectRatio="none"><path d="M0.900 10.600 L4.200 0.900 L8.700 12.200 L11.400 4.400 L14.200 16.200 L17.300 10.800 L18.900 13.200" fill="none" stroke="#e1498e" stroke-width="2.1" stroke-linejoin="round" stroke-linecap="round"/></svg>
<span class="t " style="left:637.50px;top:823.08px;font-size:15.93px;letter-spacing:-1.438px;color:#333;">°C</span>
<span class="t " style="left:662.00px;top:823.29px;font-size:16.47px;letter-spacing:-0.603px;color:#1c1c1c;font-weight:700;">Reactor Temperature</span>
<span class="t " style="left:1019.50px;top:823.29px;font-size:16.47px;letter-spacing:-0.790px;color:#007960;text-decoration:underline;">Reactor 1</span>
<span class="t " style="left:1135.40px;top:823.29px;font-size:16.47px;letter-spacing:-0.329px;color:#333;">1</span>
<svg class="b" style="left:467.5px;top:855.0px;" width="15.6" height="15.6" viewBox="0 0 16 16" preserveAspectRatio="none"><path d="M11.600 0.800 l3.600 3.600 l-1.900 1.900 l-3.600 -3.600z" fill="#007960"/><path d="M8.800 3.600 l3.600 3.600 l-7.600 7.600 l-4.400 0.800 l0.800 -4.400z" fill="#007960"/><path d="M2.600 11 l2.400 2.400" stroke="#fff" stroke-width="0.800"/><path d="M4.200 9.800 L9.400 4.600" stroke="#fff" stroke-width="0.700"/></svg>
<svg class="b" style="left:499.5px;top:855.9px;" width="16" height="16" viewBox="0 0 16 16.400" preserveAspectRatio="none"><path d="M15.600 0.400 c-4.600 0.200 -7.800 2.200 -10.200 6.200 l-3.200 0.400 l-2 3 l3.400 0.600 l2 2 l0.600 3.400 l3 -2 l0.400 -3.200 c4 -2.400 6 -5.600 6.200 -10.200z" fill="#007960"/><path d="M3.600 11.200 c-1.600 0.400 -2.600 2 -2.800 4.200 c2.200 -0.200 3.800 -1.200 4.200 -2.800z" fill="#007960"/><circle cx="11.800" cy="4.200" r="1.300" fill="#fff"/></svg>
<svg class="b" style="left:531px;top:855.1999999999999px;" width="14.8" height="14.8" viewBox="0 0 15 15" preserveAspectRatio="none"><circle cx="7.500" cy="7.500" r="7.300" fill="#007960"/><rect x="6.400" y="2.600" width="2.400" height="2.300" fill="#fff"/><path d="M5.400 6.200 h3.400 v4.600 h1 v1.600 h-4.600 v-1.600 h1 v-3 h-0.800z" fill="#fff"/></svg>
<svg class="b" style="left:556.4px;top:856.8px;" width="12.4" height="12.4" viewBox="0 0 12 12" preserveAspectRatio="none"><path d="M1.800 1.800 L10.200 10.200 M10.200 1.800 L1.800 10.200" stroke="#007960" stroke-width="3" stroke-linecap="butt"/></svg>
<svg class="b" style="left:581.8px;top:855.8px;" width="13" height="13" viewBox="0 0 13 13" preserveAspectRatio="none"><rect x="0.800" y="0.800" width="11.400" height="11.400" rx="2.600" fill="#fdfdfd" stroke="#303030" stroke-width="1.300"/></svg>
<svg class="b" style="left:609px;top:852.8px;" width="15.1" height="17.2" viewBox="0 0 15.100 17.200" preserveAspectRatio="none"><rect x="0" y="0" width="6.700" height="17.200" rx="0.800" fill="#9a6541"/><rect x="8.400" y="0" width="6.700" height="17.200" rx="0.800" fill="#9a6541"/><path d="M0.600 9.800 L2.200 5 L3.400 11.600 L4.700 5.200 L6.100 9.800" fill="none" stroke="#fff" stroke-width="1.150" stroke-linejoin="round"/><path d="M9 9.800 L10.600 5 L11.800 11.600 L13.100 5.200 L14.500 9.800" fill="none" stroke="#fff" stroke-width="1.150" stroke-linejoin="round"/></svg>
<span class="t " style="left:662.00px;top:853.69px;font-size:16.47px;letter-spacing:-1.012px;color:#1c1c1c;font-weight:700;">Batches</span>
<span class="t " style="left:1019.50px;top:853.69px;font-size:16.47px;letter-spacing:-0.790px;color:#007960;text-decoration:underline;">Reactor 1</span>
<svg class="b" style="left:467.5px;top:885.4px;" width="15.6" height="15.6" viewBox="0 0 16 16" preserveAspectRatio="none"><path d="M11.600 0.800 l3.600 3.600 l-1.900 1.900 l-3.600 -3.600z" fill="#007960"/><path d="M8.800 3.600 l3.600 3.600 l-7.600 7.600 l-4.400 0.800 l0.800 -4.400z" fill="#007960"/><path d="M2.600 11 l2.400 2.400" stroke="#fff" stroke-width="0.800"/><path d="M4.200 9.800 L9.400 4.600" stroke="#fff" stroke-width="0.700"/></svg>
<svg class="b" style="left:499.5px;top:886.3px;" width="16" height="16" viewBox="0 0 16 16.400" preserveAspectRatio="none"><path d="M15.600 0.400 c-4.600 0.200 -7.800 2.200 -10.200 6.200 l-3.200 0.400 l-2 3 l3.400 0.600 l2 2 l0.600 3.400 l3 -2 l0.400 -3.200 c4 -2.400 6 -5.600 6.200 -10.200z" fill="#007960"/><path d="M3.600 11.200 c-1.600 0.400 -2.600 2 -2.800 4.200 c2.200 -0.200 3.800 -1.200 4.200 -2.800z" fill="#007960"/><circle cx="11.800" cy="4.200" r="1.300" fill="#fff"/></svg>
<svg class="b" style="left:531px;top:885.5999999999999px;" width="14.8" height="14.8" viewBox="0 0 15 15" preserveAspectRatio="none"><circle cx="7.500" cy="7.500" r="7.300" fill="#007960"/><rect x="6.400" y="2.600" width="2.400" height="2.300" fill="#fff"/><path d="M5.400 6.200 h3.400 v4.600 h1 v1.600 h-4.600 v-1.600 h1 v-3 h-0.800z" fill="#fff"/></svg>
<svg class="b" style="left:556.4px;top:887.1999999999999px;" width="12.4" height="12.4" viewBox="0 0 12 12" preserveAspectRatio="none"><path d="M1.800 1.800 L10.200 10.200 M10.200 1.800 L1.800 10.200" stroke="#007960" stroke-width="3" stroke-linecap="butt"/></svg>
<svg class="b" style="left:581.8px;top:886.1999999999999px;" width="13" height="13" viewBox="0 0 13 13" preserveAspectRatio="none"><rect x="0.800" y="0.800" width="11.400" height="11.400" rx="2.600" fill="#fdfdfd" stroke="#303030" stroke-width="1.300"/></svg>
<svg class="b" style="left:609px;top:883.1999999999999px;" width="15.1" height="17.2" viewBox="0 0 15.100 17.200" preserveAspectRatio="none"><rect x="0" y="0" width="6.700" height="17.200" rx="0.800" fill="#4a7cc4"/><rect x="8.400" y="0" width="6.700" height="17.200" rx="0.800" fill="#4a7cc4"/><path d="M0.600 9.800 L2.200 5 L3.400 11.600 L4.700 5.200 L6.100 9.800" fill="none" stroke="#fff" stroke-width="1.150" stroke-linejoin="round"/><path d="M9 9.800 L10.600 5 L11.800 11.600 L13.100 5.200 L14.500 9.800" fill="none" stroke="#fff" stroke-width="1.150" stroke-linejoin="round"/></svg>
<span class="t " style="left:662.00px;top:884.09px;font-size:16.47px;letter-spacing:-0.654px;color:#1c1c1c;font-weight:700;">Operations</span>
<span class="t " style="left:1019.50px;top:884.09px;font-size:16.47px;letter-spacing:-0.790px;color:#007960;text-decoration:underline;">Reactor 1</span>
<svg class="b" style="left:467.5px;top:915.8000000000001px;" width="15.6" height="15.6" viewBox="0 0 16 16" preserveAspectRatio="none"><path d="M11.600 0.800 l3.600 3.600 l-1.900 1.900 l-3.600 -3.600z" fill="#007960"/><path d="M8.800 3.600 l3.600 3.600 l-7.600 7.600 l-4.400 0.800 l0.800 -4.400z" fill="#007960"/><path d="M2.600 11 l2.400 2.400" stroke="#fff" stroke-width="0.800"/><path d="M4.200 9.800 L9.400 4.600" stroke="#fff" stroke-width="0.700"/></svg>
<svg class="b" style="left:499.5px;top:916.7px;" width="16" height="16" viewBox="0 0 16 16.400" preserveAspectRatio="none"><path d="M15.600 0.400 c-4.600 0.200 -7.800 2.200 -10.200 6.200 l-3.200 0.400 l-2 3 l3.400 0.600 l2 2 l0.600 3.400 l3 -2 l0.400 -3.200 c4 -2.400 6 -5.600 6.200 -10.200z" fill="#007960"/><path d="M3.600 11.200 c-1.600 0.400 -2.600 2 -2.800 4.200 c2.200 -0.200 3.800 -1.200 4.200 -2.800z" fill="#007960"/><circle cx="11.800" cy="4.200" r="1.300" fill="#fff"/></svg>
<svg class="b" style="left:531px;top:916.0px;" width="14.8" height="14.8" viewBox="0 0 15 15" preserveAspectRatio="none"><circle cx="7.500" cy="7.500" r="7.300" fill="#007960"/><rect x="6.400" y="2.600" width="2.400" height="2.300" fill="#fff"/><path d="M5.400 6.200 h3.400 v4.600 h1 v1.600 h-4.600 v-1.600 h1 v-3 h-0.800z" fill="#fff"/></svg>
<svg class="b" style="left:556.4px;top:917.6px;" width="12.4" height="12.4" viewBox="0 0 12 12" preserveAspectRatio="none"><path d="M1.800 1.800 L10.200 10.200 M10.200 1.800 L1.800 10.200" stroke="#007960" stroke-width="3" stroke-linecap="butt"/></svg>
<svg class="b" style="left:581.8px;top:916.6px;" width="13" height="13" viewBox="0 0 13 13" preserveAspectRatio="none"><rect x="0.800" y="0.800" width="11.400" height="11.400" rx="2.600" fill="#fdfdfd" stroke="#303030" stroke-width="1.300"/></svg>
<svg class="b" style="left:609px;top:913.6px;" width="15.1" height="17.2" viewBox="0 0 15.100 17.200" preserveAspectRatio="none"><rect x="0" y="0" width="6.700" height="17.200" rx="0.800" fill="#b5482a"/><rect x="8.400" y="0" width="6.700" height="17.200" rx="0.800" fill="#b5482a"/><path d="M0.600 9.800 L2.200 5 L3.400 11.600 L4.700 5.200 L6.100 9.800" fill="none" stroke="#fff" stroke-width="1.150" stroke-linejoin="round"/><path d="M9 9.800 L10.600 5 L11.800 11.600 L13.100 5.200 L14.500 9.800" fill="none" stroke="#fff" stroke-width="1.150" stroke-linejoin="round"/></svg>
<span class="t " style="left:662.00px;top:914.49px;font-size:16.47px;letter-spacing:-1.198px;color:#1c1c1c;font-weight:700;">Phases</span>
<span class="t " style="left:1019.50px;top:914.49px;font-size:16.47px;letter-spacing:-0.790px;color:#007960;text-decoration:underline;">Reactor 1</span>
<div class="b" style="left:1257.5px;top:749.5px;width:10px;height:297.5px;background:#f5f5f5;"></div>
<div class="b" style="left:1257.6px;top:782.5px;width:1px;height:264px;background:#dedede;"></div>
<div class="b" style="left:1260px;top:892.6px;width:1.6px;height:10.8px;background:#777;"></div>
<div class="b" style="left:1263px;top:892.6px;width:1.6px;height:10.8px;background:#777;"></div>
<div class="b" style="left:1267.5px;top:749.5px;width:458.5px;height:297.5px;background:#fdfdfd;"></div>
<div class="b" style="left:1267.5px;top:749.5px;width:458.5px;height:33px;background:#007960;"></div>
<svg class="b" style="left:1282.4px;top:756px;" width="13.2" height="17.6" viewBox="0 0 13.800 18" preserveAspectRatio="none"><path d="M4 0.700 H1 V17.300 H4 M9.800 0.700 H12.800 V17.300 H9.800" fill="none" stroke="#fff" stroke-width="1.900"/><path d="M3.200 9.500 L4.700 3.600 L6.700 14.400 L8.700 4.800 L10.500 10.500" fill="none" stroke="#fff" stroke-width="1.500" stroke-linejoin="round"/></svg>
<span class="t " style="left:1304.50px;top:756.49px;font-size:16.83px;letter-spacing:-0.958px;color:#fff;">Capsules</span>
<div class="b" style="left:1661.8px;top:753.2px;width:58px;height:25.4px;background:#fdfdfd;border-radius:3px;"></div>
<div class="b" style="left:1690.4px;top:753.2px;width:1px;height:25.4px;background:#bbb;"></div>
<svg class="b" style="left:1668px;top:757.6px;" width="16.6" height="16.6" viewBox="0 0 16 16" preserveAspectRatio="none"><circle cx="6.6" cy="6.6" r="5.2" fill="none" stroke="#222" stroke-width="1.9"/><path d="M10.6 10.6 L14.6 14.6" stroke="#222" stroke-width="2.5" stroke-linecap="round"/><path d="M4 6.6 h5.2 M6.6 4 v5.2" stroke="#222" stroke-width="1.4"/></svg>
<svg class="b" style="left:1698.4px;top:759px;" width="13.6" height="13.6" viewBox="0 0 14 14" preserveAspectRatio="none"><rect x="0.800" y="0.800" width="12.400" height="12.400" rx="2.400" fill="none" stroke="#333" stroke-width="1.300"/><path d="M3.600 7 h6.800" stroke="#333" stroke-width="1.400"/></svg>
<div class="b" style="left:1715.6px;top:782.5px;width:10.4px;height:231px;background:#f3f3f3;"></div>
<div class="b" style="left:1716px;top:783.5px;width:8.6px;height:68.5px;background:linear-gradient(90deg,#dcdcdc,#cfcfcf);border-radius:4px 4px 0 0;"></div>
<svg class="b" style="left:1275.2px;top:800px;" width="14" height="13.4" viewBox="0 0 13 13" preserveAspectRatio="none"><rect x="0.800" y="0.800" width="11.400" height="11.400" rx="2.600" fill="#fdfdfd" stroke="#303030" stroke-width="1.300"/></svg>
<span class="t " style="left:1331.80px;top:795.19px;font-size:16.47px;letter-spacing:-0.265px;color:#007960;font-weight:700;">Start</span>
<svg class="b" style="left:1373.7px;top:798.2px;" width="10.6" height="6.1" viewBox="0 0 10 6" preserveAspectRatio="none"><path d="M0.400 5.600 L5 0.400 L9.600 5.600z" fill="#007960"/></svg>
<svg class="b" style="left:1393.2px;top:795.4px;" width="4.6" height="19.4" viewBox="0 0 4.600 19.400" preserveAspectRatio="none"><circle cx="2.300" cy="3.2" r="2.200" fill="#cbcbcb"/><circle cx="2.300" cy="9.7" r="2.200" fill="#cbcbcb"/><circle cx="2.300" cy="16.2" r="2.200" fill="#cbcbcb"/></svg>
<span class="t " style="left:1507.50px;top:795.19px;font-size:16.47px;letter-spacing:-0.687px;color:#222;font-weight:700;">Value</span>
<svg class="b" style="left:1553.5px;top:798.4px;" width="10" height="15" viewBox="0 0 10 15" preserveAspectRatio="none"><path d="M0.400 6 L5 0.600 L9.600 6z M0.400 9 L5 14.400 L9.600 9z" fill="#444"/></svg>
<svg class="b" style="left:1572.7px;top:795.4px;" width="4.6" height="19.4" viewBox="0 0 4.600 19.400" preserveAspectRatio="none"><circle cx="2.300" cy="3.2" r="2.200" fill="#cbcbcb"/><circle cx="2.300" cy="9.7" r="2.200" fill="#cbcbcb"/><circle cx="2.300" cy="16.2" r="2.200" fill="#cbcbcb"/></svg>
<svg class="b" style="left:1629px;top:793.5px;" width="21.6" height="18.4" viewBox="0 0 22 19" preserveAspectRatio="none"><rect x="0.600" y="0.600" width="17.600" height="14.400" rx="1" fill="none" stroke="#7a7a7a" stroke-width="1.100"/><path d="M0.600 5.400 H12 M0.600 10.200 H12" stroke="#7a7a7a" stroke-width="1.100"/><rect x="11" y="1" width="6.800" height="13.600" fill="#7a7a7a" opacity="0.300"/><path d="M11 0.600 V15" stroke="#7a7a7a" stroke-width="1.100"/><circle cx="17.200" cy="14.200" r="4.300" fill="#222"/><path d="M14.800 14.200 h4.800 M17.200 11.800 v4.800" stroke="#fff" stroke-width="1.300"/></svg>
<div class="b" style="left:1658.4px;top:787.5px;width:1px;height:30px;background:#d0d0d0;"></div>
<svg class="b" style="left:1682px;top:793.5px;" width="21.6" height="18.4" viewBox="0 0 22 19" preserveAspectRatio="none"><rect x="0.600" y="0.600" width="17.600" height="14.400" rx="1" fill="none" stroke="#ee86b5" stroke-width="1.100"/><path d="M0.600 5.400 H12 M0.600 10.200 H12" stroke="#ee86b5" stroke-width="1.100"/><rect x="11" y="1" width="6.800" height="13.600" fill="#ee86b5" opacity="0.300"/><path d="M11 0.600 V15" stroke="#ee86b5" stroke-width="1.100"/><circle cx="17.200" cy="14.200" r="4.300" fill="#e1498e"/><path d="M14.800 14.200 h4.800 M17.200 11.800 v4.800" stroke="#fff" stroke-width="1.300"/></svg>
<div class="b" style="left:1267.5px;top:823px;width:448.0999999999999px;height:31px;background:#f8f8f8;"></div>
<div class="b" style="left:1267.5px;top:852px;width:448.0999999999999px;height:2px;background:#e0e4ec;"></div>
<div class="b" style="left:1267.5px;top:822px;width:448.0999999999999px;height:2px;background:#d8dde7;"></div>
<svg class="b" style="left:1274.6px;top:830.2px;" width="15.6" height="15.6" viewBox="0 0 16 16" preserveAspectRatio="none"><circle cx="8" cy="8" r="6.600" fill="none" stroke="#b5b5b5" stroke-width="2.100"/><path d="M3.600 12.400 L12.400 3.600" stroke="#b5b5b5" stroke-width="2"/></svg>
<svg class="b" style="left:1306.6px;top:827.6px;" width="13.2" height="17.6" viewBox="0 0 13.800 18" preserveAspectRatio="none"><path d="M4 0.700 H1 V17.300 H4 M9.800 0.700 H12.800 V17.300 H9.800" fill="none" stroke="#9a6541" stroke-width="1.900"/><path d="M3.200 9.500 L4.700 3.600 L6.700 14.400 L8.700 4.800 L10.500 10.500" fill="none" stroke="#9a6541" stroke-width="1.500" stroke-linejoin="round"/></svg>
<span class="t " style="left:1331.80px;top:828.19px;font-size:16.47px;letter-spacing:-0.502px;color:#222;">Starts off-screen</span>
<span class="t " style="left:1507.50px;top:828.19px;font-size:16.47px;letter-spacing:-0.823px;color:#222;">Batch R1-04</span>
<div class="b" style="left:1267.5px;top:883px;width:448.0999999999999px;height:2px;background:#e0e4ec;"></div>
<svg class="b" style="left:1274.6px;top:860.48px;" width="15.6" height="15.6" viewBox="0 0 16 16" preserveAspectRatio="none"><circle cx="8" cy="8" r="6.600" fill="none" stroke="#b5b5b5" stroke-width="2.100"/><path d="M3.600 12.400 L12.400 3.600" stroke="#b5b5b5" stroke-width="2"/></svg>
<svg class="b" style="left:1306.6px;top:857.88px;" width="13.2" height="17.6" viewBox="0 0 13.800 18" preserveAspectRatio="none"><path d="M4 0.700 H1 V17.300 H4 M9.800 0.700 H12.800 V17.300 H9.800" fill="none" stroke="#b5482a" stroke-width="1.900"/><path d="M3.200 9.500 L4.700 3.600 L6.700 14.400 L8.700 4.800 L10.500 10.500" fill="none" stroke="#b5482a" stroke-width="1.500" stroke-linejoin="round"/></svg>
<span class="t " style="left:1331.80px;top:858.47px;font-size:16.47px;letter-spacing:-0.502px;color:#222;">Starts off-screen</span>
<span class="t " style="left:1507.50px;top:858.47px;font-size:16.47px;letter-spacing:-1.062px;color:#222;">Phase 3</span>
<div class="b" style="left:1267.5px;top:884px;width:448.0999999999999px;height:31px;background:#f8f8f8;"></div>
<div class="b" style="left:1267.5px;top:913px;width:448.0999999999999px;height:2px;background:#e0e4ec;"></div>
<svg class="b" style="left:1274.6px;top:890.76px;" width="15.6" height="15.6" viewBox="0 0 16 16" preserveAspectRatio="none"><circle cx="8" cy="8" r="6.600" fill="none" stroke="#b5b5b5" stroke-width="2.100"/><path d="M3.600 12.400 L12.400 3.600" stroke="#b5b5b5" stroke-width="2"/></svg>
<svg class="b" style="left:1306.6px;top:888.16px;" width="13.2" height="17.6" viewBox="0 0 13.800 18" preserveAspectRatio="none"><path d="M4 0.700 H1 V17.300 H4 M9.800 0.700 H12.800 V17.300 H9.800" fill="none" stroke="#4a7cc4" stroke-width="1.900"/><path d="M3.200 9.500 L4.700 3.600 L6.700 14.400 L8.700 4.800 L10.500 10.500" fill="none" stroke="#4a7cc4" stroke-width="1.500" stroke-linejoin="round"/></svg>
<span class="t " style="left:1331.80px;top:888.75px;font-size:16.47px;letter-spacing:-0.502px;color:#222;">Starts off-screen</span>
<span class="t " style="left:1507.50px;top:888.75px;font-size:16.47px;letter-spacing:-0.461px;color:#222;">Operation 4</span>
<div class="b" style="left:1267.5px;top:943px;width:448.0999999999999px;height:2px;background:#e0e4ec;"></div>
<svg class="b" style="left:1275.2px;top:922.6400000000001px;" width="14" height="13.4" viewBox="0 0 13 13" preserveAspectRatio="none"><rect x="0.800" y="0.800" width="11.400" height="11.400" rx="2.600" fill="#fdfdfd" stroke="#303030" stroke-width="1.300"/></svg>
<svg class="b" style="left:1306.6px;top:918.44px;" width="13.2" height="17.6" viewBox="0 0 13.800 18" preserveAspectRatio="none"><path d="M4 0.700 H1 V17.300 H4 M9.800 0.700 H12.800 V17.300 H9.800" fill="none" stroke="#b5482a" stroke-width="1.900"/><path d="M3.200 9.500 L4.700 3.600 L6.700 14.400 L8.700 4.800 L10.500 10.500" fill="none" stroke="#b5482a" stroke-width="1.500" stroke-linejoin="round"/></svg>
<span class="t " style="left:1331.80px;top:919.03px;font-size:16.47px;letter-spacing:-0.844px;color:#222;">13 de ago. de 2022 21:50</span>
<span class="t " style="left:1507.50px;top:919.03px;font-size:16.47px;letter-spacing:-1.062px;color:#222;">Phase 4</span>
<div class="b" style="left:1267.5px;top:944px;width:448.0999999999999px;height:31px;background:#f8f8f8;"></div>
<div class="b" style="left:1267.5px;top:973px;width:448.0999999999999px;height:2px;background:#e0e4ec;"></div>
<svg class="b" style="left:1275.2px;top:952.9200000000001px;" width="14" height="13.4" viewBox="0 0 13 13" preserveAspectRatio="none"><rect x="0.800" y="0.800" width="11.400" height="11.400" rx="2.600" fill="#fdfdfd" stroke="#303030" stroke-width="1.300"/></svg>
<svg class="b" style="left:1306.6px;top:948.72px;" width="13.2" height="17.6" viewBox="0 0 13.800 18" preserveAspectRatio="none"><path d="M4 0.700 H1 V17.300 H4 M9.800 0.700 H12.800 V17.300 H9.800" fill="none" stroke="#b5482a" stroke-width="1.900"/><path d="M3.200 9.500 L4.700 3.600 L6.700 14.400 L8.700 4.800 L10.500 10.500" fill="none" stroke="#b5482a" stroke-width="1.500" stroke-linejoin="round"/></svg>
<span class="t " style="left:1331.80px;top:949.31px;font-size:16.47px;letter-spacing:-0.844px;color:#222;">13 de ago. de 2022 23:12</span>
<span class="t " style="left:1507.50px;top:949.31px;font-size:16.47px;letter-spacing:-1.134px;color:#222;">Phase 1</span>
<div class="b" style="left:1267.5px;top:1004px;width:448.0999999999999px;height:2px;background:#e0e4ec;"></div>
<svg class="b" style="left:1275.2px;top:983.2px;" width="14" height="13.4" viewBox="0 0 13 13" preserveAspectRatio="none"><rect x="0.800" y="0.800" width="11.400" height="11.400" rx="2.600" fill="#fdfdfd" stroke="#303030" stroke-width="1.300"/></svg>
<svg class="b" style="left:1306.6px;top:979.0px;" width="13.2" height="17.6" viewBox="0 0 13.800 18" preserveAspectRatio="none"><path d="M4 0.700 H1 V17.300 H4 M9.800 0.700 H12.800 V17.300 H9.800" fill="none" stroke="#4a7cc4" stroke-width="1.900"/><path d="M3.200 9.500 L4.700 3.600 L6.700 14.400 L8.700 4.800 L10.500 10.500" fill="none" stroke="#4a7cc4" stroke-width="1.500" stroke-linejoin="round"/></svg>
<span class="t " style="left:1331.80px;top:979.59px;font-size:16.47px;letter-spacing:-0.844px;color:#222;">13 de ago. de 2022 23:12</span>
<span class="t " style="left:1507.50px;top:979.59px;font-size:16.47px;letter-spacing:-0.461px;color:#222;">Operation 5</span>
<div class="b" style="left:1267.5px;top:1005.6px;width:448.0999999999999px;height:7.8px;overflow:hidden;background:#f8f8f8;">
<svg class="b" style="left:39.09999999999991px;top:3.8px" width="13.2" height="17.6" viewBox="0 0 13.800 18" preserveAspectRatio="none"><path d="M4 0.700 H1 V17.300 H4 M9.800 0.700 H12.800 V17.300 H9.800" fill="none" stroke="#b5482a" stroke-width="1.900"/><path d="M3.200 9.500 L4.700 3.600 L6.700 14.400 L8.700 4.800 L10.500 10.500" fill="none" stroke="#b5482a" stroke-width="1.500" stroke-linejoin="round"/></svg>
<svg class="b" style="left:7.099999999999909px;top:6.4px" width="15.6" height="15.6" viewBox="0 0 16 16"><circle cx="8" cy="8" r="6.600" fill="none" stroke="#b5b5b5" stroke-width="2.100"/><path d="M3.600 12.400 L12.400 3.600" stroke="#b5b5b5" stroke-width="2"/></svg>
</div>
<div class="b" style="left:1267.5px;top:1013.4px;width:458.5px;height:33.6px;background:#f7f7f7;"></div>
<div class="b" style="left:1267.5px;top:1013.4px;width:458.5px;height:1px;background:#e2e2e2;"></div>
<span class="t " style="left:1274.00px;top:1020.09px;font-size:16.47px;letter-spacing:-1.148px;color:#333;">Page:</span>
<div class="b" style="left:1318.9px;top:1016.6px;width:63px;height:28.4px;background:#fdfdfd;border:1px solid #cccccc;border-radius:5px;box-sizing:border-box;"></div>
<span class="t " style="left:1325.20px;top:1020.09px;font-size:16.47px;letter-spacing:-0.329px;color:#333;">1</span>
<svg class="b" style="left:1360.6px;top:1026.6px;" width="15.7" height="9" viewBox="0 0 10 6" preserveAspectRatio="none"><path d="M1 1 L5 5 L9 1" fill="none" stroke="#c2c2c2" stroke-width="1.4" stroke-linecap="round" stroke-linejoin="round"/></svg>
<span class="t " style="left:1389.00px;top:1020.09px;font-size:16.47px;letter-spacing:-0.755px;color:#333;">Show:</span>
<div class="b" style="left:1438.2px;top:1016.6px;width:63.4px;height:28.4px;background:#fdfdfd;border:1px solid #cccccc;border-radius:5px;box-sizing:border-box;"></div>
<span class="t " style="left:1445.00px;top:1020.09px;font-size:16.47px;letter-spacing:-1.027px;color:#333;">100</span>
<svg class="b" style="left:1479.8px;top:1026.6px;" width="15.7" height="9" viewBox="0 0 10 6" preserveAspectRatio="none"><path d="M1 1 L5 5 L9 1" fill="none" stroke="#c2c2c2" stroke-width="1.4" stroke-linecap="round" stroke-linejoin="round"/></svg>
<div class="b" style="left:1649px;top:1017.6px;width:67px;height:26px;background:#f1f1f1;border-radius:3px;"></div>
<div class="b" style="left:1671px;top:1017.6px;width:26px;height:26px;background:#007960;"></div>
<span class="t " style="left:1679.78px;top:1020.49px;font-size:16.47px;letter-spacing:-0.329px;color:#fff;">1</span>
<svg class="b" style="left:1656.6px;top:1024.6px" width="7" height="11" viewBox="0 0 7 11"><path d="M6.600 0.400 V10.600 L0.400 5.500z" fill="#5aa596"/></svg>
<svg class="b" style="left:1704.6px;top:1024.6px" width="7" height="11" viewBox="0 0 7 11"><path d="M0.400 0.400 V10.600 L6.600 5.500z" fill="#5aa596"/></svg>
<div class="b" style="left:0px;top:1046px;width:1726px;height:34px;background:#e2e2e2;"></div>
<div class="b" style="left:263px;top:1078px;width:1463px;height:2px;background:#0a0a0a;"></div>
<div class="b" style="left:0px;top:1038.2px;width:151px;height:40.6px;background:#0aa5ea;border-radius:0 5px 0 0;"></div>
<svg class="b" style="left:26.9px;top:1053.1px;" width="25.7" height="21.4" viewBox="0 0 22 18.600" preserveAspectRatio="none"><path d="M11 1 C5.400 1 1 4.200 1 8.200 c0 2.300 1.500 4.300 3.800 5.600 c-0.300 1.400 -1.100 2.600 -2.200 3.600 c2.400 -0.200 4.400 -1 6 -2.300 c0.800 0.100 1.600 0.200 2.400 0.200 c5.600 0 10 -3.200 10 -7.100 S16.600 1 11 1z" fill="none" stroke="#fff" stroke-width="1.9" stroke-linejoin="round"/><circle cx="6.6" cy="8.200" r="1.300" fill="#fff"/><circle cx="11" cy="8.200" r="1.300" fill="#fff"/><circle cx="15.4" cy="8.200" r="1.300" fill="#fff"/></svg>
<span class="t " style="left:62.60px;top:1050.66px;font-size:14.12px;letter-spacing:-0.626px;color:#fff;">Feedback</span>
<span class="t " style="left:173.00px;top:1052.68px;font-size:15.93px;letter-spacing:-0.794px;color:#234a3f;">R58.0.1-v202208130407-SNAPSHOT</span>
<span class="t " style="left:1500.00px;top:1052.69px;font-size:16.47px;letter-spacing:-0.742px;color:#555;">Datasources</span>
<span class="t " style="left:1590.60px;top:1052.09px;font-size:16.47px;letter-spacing:-0.329px;color:#555;">|</span>
<span class="t " style="left:1602.30px;top:1052.69px;font-size:16.47px;letter-spacing:-0.634px;color:#555;">Server load:</span>
<span class="t " style="left:1691.40px;top:1052.69px;font-size:16.47px;letter-spacing:-0.902px;color:#1d6a58;">6%</span>
<svg class="b" style="left:1155px;top:958px;" width="24" height="34" viewBox="0 0 24 34" preserveAspectRatio="none"><path d="M1 1 V28.700 L7.700 22 L12.300 31.800 L16.200 30.600 L11.300 20.700 H21.200z" fill="#050505"/></svg>
</body></html>
